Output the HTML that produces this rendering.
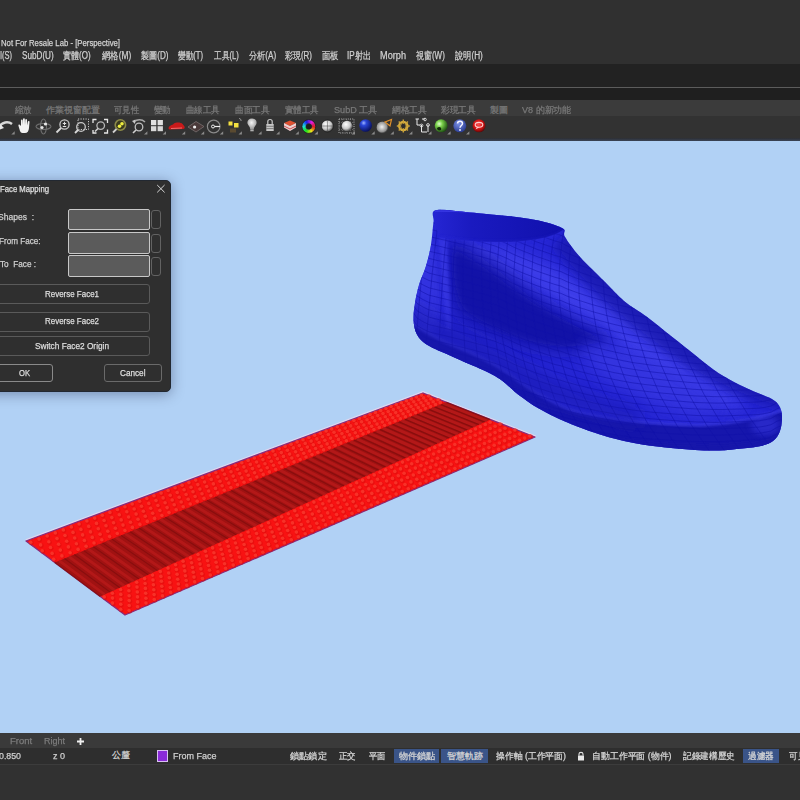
<!DOCTYPE html>
<html><head><meta charset="utf-8">
<style>
*{box-sizing:border-box}
html,body{margin:0;padding:0;width:800px;height:800px;overflow:hidden;background:#303030;font-family:"Liberation Sans",sans-serif}
.abs{position:absolute}
.t{position:absolute;white-space:pre;line-height:1;transform-origin:0 50%;-webkit-text-stroke:0.25px currentColor}
</style></head><body>
<div class="abs" style="left:0;top:0;width:800px;height:63.5px;background:#303030"></div>
<div class="abs" style="left:0;top:63.5px;width:800px;height:23.5px;background:#222222"></div>
<div class="abs" style="left:0;top:86.6px;width:800px;height:1.6px;background:#5c5c5c"></div>
<div class="abs" style="left:0;top:88.2px;width:800px;height:12.2px;background:#1f1f1f"></div>
<div class="abs" style="left:0;top:100.4px;width:800px;height:16px;background:#3b3b3b"></div>
<div class="abs" style="left:0;top:116.4px;width:800px;height:21.4px;background:#323232"></div>
<div class="abs" style="left:0;top:137.6px;width:800px;height:3.2px;background:linear-gradient(#2c2e33,#3a4456)"></div>
<div class="abs" style="left:0;top:140.5px;width:800px;height:592.5px;background:#b1d1f5"></div>
<div class="abs" style="left:0;top:732.6px;width:800px;height:15.4px;background:#3a3a3a"></div>
<div class="abs" style="left:0;top:748px;width:800px;height:15.8px;background:#2e2e2e"></div>
<div class="abs" style="left:0;top:763.8px;width:800px;height:1px;background:#3c3c3c"></div>
<div class="abs" style="left:0;top:764.8px;width:800px;height:36px;background:#313131"></div>

<svg class="abs" style="left:0;top:0" width="800" height="140" viewBox="0 0 800 140"><defs><radialGradient id="gBlue" cx="35%" cy="30%" r="70%"><stop offset="0" stop-color="#9fb4ff"/><stop offset="0.3" stop-color="#2a46d8"/><stop offset="1" stop-color="#0a1260"/></radialGradient><radialGradient id="gGreen" cx="35%" cy="35%" r="70%"><stop offset="0" stop-color="#e0ffd0"/><stop offset="0.35" stop-color="#7ad04a"/><stop offset="1" stop-color="#1a4a10"/></radialGradient><radialGradient id="gHelp" cx="40%" cy="35%" r="70%"><stop offset="0" stop-color="#7a90e8"/><stop offset="1" stop-color="#25368a"/></radialGradient><radialGradient id="gRed" cx="45%" cy="40%" r="65%"><stop offset="0" stop-color="#ff5050"/><stop offset="0.6" stop-color="#c81010"/><stop offset="1" stop-color="#400808"/></radialGradient><radialGradient id="gWhite" cx="40%" cy="35%" r="70%"><stop offset="0" stop-color="#ffffff"/><stop offset="0.6" stop-color="#c8c8c8"/><stop offset="1" stop-color="#3a3a3a"/></radialGradient><radialGradient id="gBlob" cx="45%" cy="45%" r="60%"><stop offset="0" stop-color="#f0f0f0"/><stop offset="0.7" stop-color="#909090"/><stop offset="1" stop-color="#2c2c2c" stop-opacity="0"/></radialGradient><radialGradient id="gBulb" cx="45%" cy="40%" r="60%"><stop offset="0" stop-color="#f4f4f4"/><stop offset="1" stop-color="#9a9a9a"/></radialGradient></defs><path d="M-1,127 C2,122 8,121 12,124" stroke="#d8d8d8" stroke-width="2.5" fill="none"/><path d="M0,124 L4,128 L-1,130 Z" fill="#e8e8e8"/><path d="M20,131 L18.5,126 C18,124.5 19.5,124 20.5,125.5 L21,126 L21,120.5 C21,119.3 22.6,119.3 22.6,120.5 L22.7,125 L23,119.3 C23,118 24.8,118 24.8,119.3 L25,125 L25.3,120 C25.3,118.8 27,118.8 27,120 L27,125.5 L27.8,121.8 C28,120.7 29.6,120.8 29.5,122 L29,128 C28.7,131 27.5,133 25,133 L22.5,133 C21.3,133 20.5,132.3 20,131 Z" fill="#f2f2f2"/><ellipse cx="43.5" cy="126.5" rx="7.5" ry="3" stroke="#6e6e6e" stroke-width="1.1" fill="none"/><ellipse cx="43.5" cy="126.5" rx="3" ry="7.5" stroke="#6e6e6e" stroke-width="1.1" fill="none"/><circle cx="45.5" cy="124" r="1.6" fill="#e8e8e8"/><circle cx="42" cy="127.5" r="1.6" fill="#e8e8e8"/><circle cx="64.5" cy="124.5" r="4.6" stroke="#c8c8c8" stroke-width="1.3" fill="none"/><path d="M61,128 L56.5,132.5" stroke="#d8d8d8" stroke-width="1.8"/><path d="M62.8,123.5 L66.2,123.5 M64.5,121.8 L64.5,125.2 M62.8,126.5 L66.2,126.5" stroke="#e0e0e0" stroke-width="1"/><rect x="78" y="119" width="10.5" height="10.5" stroke="#c8c8c8" stroke-width="1" stroke-dasharray="1.2,1.3" fill="none"/><circle cx="81" cy="127" r="4.3" stroke="#c8c8c8" stroke-width="1.3" fill="none"/><path d="M78,130 L75,133" stroke="#d8d8d8" stroke-width="1.8"/><path d="M93,123 L93,119.5 L96.5,119.5 M104,119.5 L107.5,119.5 L107.5,123 M107.5,129.5 L107.5,133 L104,133 M93,130 L93,133 L96.5,133" stroke="#e6e6e6" stroke-width="1.3" fill="none"/><circle cx="100.7" cy="125.6" r="3.8" stroke="#b8b8b8" stroke-width="1.3" fill="none"/><path d="M98,128.5 L95,131.5" stroke="#d0d0d0" stroke-width="1.6"/><circle cx="120.4" cy="125" r="5.2" stroke="#8c8a48" stroke-width="1.6" fill="#3a3a20"/><circle cx="119.5" cy="126.2" r="1.8" fill="#f0f040"/><circle cx="122" cy="123.8" r="1.8" fill="#f0f040"/><path d="M116.5,129 L113,132.5" stroke="#d0d0d0" stroke-width="1.8"/><circle cx="139" cy="127" r="3.8" stroke="#c0c0c0" stroke-width="1.3" fill="none"/><path d="M136,130 L133,133" stroke="#d0d0d0" stroke-width="1.6"/><path d="M134,122 C137,119 142,119 145,122" stroke="#a8a8a8" stroke-width="1.5" fill="none"/><path d="M132,121 L135.5,119.5 L135,124 Z" fill="#c8c8c8"/><rect x="151" y="120" width="5.3" height="5.2" fill="#e0e0e0"/><rect x="157.6" y="120" width="5.3" height="5.2" fill="#e0e0e0"/><rect x="151" y="126.2" width="5.3" height="5" fill="#d8d8d8"/><rect x="157.6" y="126.2" width="5.3" height="5" fill="#d8d8d8"/><path d="M168.5,128.5 C169,125 172,125.5 174,123.5 C176,122 181,122 182.5,124 L184.5,126.5 C185,128 184.5,129 183,129 L169.5,129.5 Z" fill="#c81a1a"/><path d="M171,128.5 L182,128" stroke="#ff9090" stroke-width="0.7"/><path d="M188,127 L196,121.5 L204,126.5 L196,132 Z" fill="#4a3a3a" stroke="#787070" stroke-width="0.8"/><circle cx="194.6" cy="127" r="1.6" fill="#f0f0f0"/><circle cx="213.7" cy="126.5" r="6.3" stroke="#8a8a8a" stroke-width="1.2" fill="none"/><circle cx="213" cy="126.5" r="1.5" fill="none" stroke="#f0f0f0" stroke-width="1"/><path d="M214.5,126.5 L220,126.5" stroke="#f0f0f0" stroke-width="1.2"/><rect x="228.5" y="121.5" width="4" height="4" fill="#f4e040"/><rect x="234" y="123" width="4.5" height="4.5" fill="#f4e040"/><rect x="230" y="128.5" width="6" height="4" fill="#5a4a30"/><path d="M239,118.5 A2,2 0 0 1 241,121" stroke="#9a9a9a" stroke-width="1" fill="none"/><path d="M252,118.5 C255.5,118.5 257,121 256.5,123.5 C256,125.5 254,126.5 253.8,129 L250.2,129 C250,126.5 248,125.5 247.5,123.5 C247,121 248.5,118.5 252,118.5 Z" fill="url(#gBulb)"/><rect x="250.3" y="129.3" width="3.4" height="2" fill="#b0b0b0"/><path d="M267.8,124 L267.8,121.5 C267.8,118.8 272.2,118.8 272.2,121.5 L272.2,124" stroke="#c8c8c8" stroke-width="1.2" fill="none"/><rect x="266.3" y="124" width="7.4" height="7" fill="#c8c8c8"/><path d="M266.3,126.3 L273.7,126.3 M266.3,128.6 L273.7,128.6" stroke="#5a5a5a" stroke-width="0.7"/><path d="M284,123 L290,120.5 L296,123 L290,126 Z" fill="#e05030"/><path d="M284,123 L290,126 L296,123 L296,127.5 L290,131 L284,127.5 Z" fill="#f0d0d0"/><path d="M284,126 L290,129 L296,126" stroke="#c03030" stroke-width="0.8" fill="none"/><path d="M313.80,126.50 A5.0,5.0 0 0 1 313.74,127.28" stroke="hsl(0,100%,55%)" stroke-width="3.4" fill="none"/><path d="M313.76,127.15 A5.0,5.0 0 0 1 313.59,127.92" stroke="hsl(8,100%,55%)" stroke-width="3.4" fill="none"/><path d="M313.63,127.79 A5.0,5.0 0 0 1 313.37,128.53" stroke="hsl(15,100%,55%)" stroke-width="3.4" fill="none"/><path d="M313.42,128.41 A5.0,5.0 0 0 1 313.06,129.11" stroke="hsl(22,100%,55%)" stroke-width="3.4" fill="none"/><path d="M313.13,129.00 A5.0,5.0 0 0 1 312.69,129.65" stroke="hsl(30,100%,55%)" stroke-width="3.4" fill="none"/><path d="M312.77,129.54 A5.0,5.0 0 0 1 312.24,130.13" stroke="hsl(38,100%,55%)" stroke-width="3.4" fill="none"/><path d="M312.34,130.04 A5.0,5.0 0 0 1 311.74,130.55" stroke="hsl(45,100%,55%)" stroke-width="3.4" fill="none"/><path d="M311.84,130.47 A5.0,5.0 0 0 1 311.19,130.89" stroke="hsl(52,100%,55%)" stroke-width="3.4" fill="none"/><path d="M311.30,130.83 A5.0,5.0 0 0 1 310.59,131.17" stroke="hsl(60,100%,55%)" stroke-width="3.4" fill="none"/><path d="M310.71,131.12 A5.0,5.0 0 0 1 309.97,131.36" stroke="hsl(68,100%,55%)" stroke-width="3.4" fill="none"/><path d="M310.09,131.33 A5.0,5.0 0 0 1 309.32,131.47" stroke="hsl(75,100%,55%)" stroke-width="3.4" fill="none"/><path d="M309.45,131.46 A5.0,5.0 0 0 1 308.67,131.50" stroke="hsl(82,100%,55%)" stroke-width="3.4" fill="none"/><path d="M308.80,131.50 A5.0,5.0 0 0 1 308.02,131.44" stroke="hsl(90,100%,55%)" stroke-width="3.4" fill="none"/><path d="M308.15,131.46 A5.0,5.0 0 0 1 307.38,131.29" stroke="hsl(98,100%,55%)" stroke-width="3.4" fill="none"/><path d="M307.51,131.33 A5.0,5.0 0 0 1 306.77,131.07" stroke="hsl(105,100%,55%)" stroke-width="3.4" fill="none"/><path d="M306.89,131.12 A5.0,5.0 0 0 1 306.19,130.76" stroke="hsl(112,100%,55%)" stroke-width="3.4" fill="none"/><path d="M306.30,130.83 A5.0,5.0 0 0 1 305.65,130.39" stroke="hsl(120,100%,55%)" stroke-width="3.4" fill="none"/><path d="M305.76,130.47 A5.0,5.0 0 0 1 305.17,129.94" stroke="hsl(128,100%,55%)" stroke-width="3.4" fill="none"/><path d="M305.26,130.04 A5.0,5.0 0 0 1 304.75,129.44" stroke="hsl(135,100%,55%)" stroke-width="3.4" fill="none"/><path d="M304.83,129.54 A5.0,5.0 0 0 1 304.41,128.89" stroke="hsl(142,100%,55%)" stroke-width="3.4" fill="none"/><path d="M304.47,129.00 A5.0,5.0 0 0 1 304.13,128.29" stroke="hsl(150,100%,55%)" stroke-width="3.4" fill="none"/><path d="M304.18,128.41 A5.0,5.0 0 0 1 303.94,127.67" stroke="hsl(158,100%,55%)" stroke-width="3.4" fill="none"/><path d="M303.97,127.79 A5.0,5.0 0 0 1 303.83,127.02" stroke="hsl(165,100%,55%)" stroke-width="3.4" fill="none"/><path d="M303.84,127.15 A5.0,5.0 0 0 1 303.80,126.37" stroke="hsl(172,100%,55%)" stroke-width="3.4" fill="none"/><path d="M303.80,126.50 A5.0,5.0 0 0 1 303.86,125.72" stroke="hsl(180,100%,55%)" stroke-width="3.4" fill="none"/><path d="M303.84,125.85 A5.0,5.0 0 0 1 304.01,125.08" stroke="hsl(188,100%,55%)" stroke-width="3.4" fill="none"/><path d="M303.97,125.21 A5.0,5.0 0 0 1 304.23,124.47" stroke="hsl(195,100%,55%)" stroke-width="3.4" fill="none"/><path d="M304.18,124.59 A5.0,5.0 0 0 1 304.54,123.89" stroke="hsl(202,100%,55%)" stroke-width="3.4" fill="none"/><path d="M304.47,124.00 A5.0,5.0 0 0 1 304.91,123.35" stroke="hsl(210,100%,55%)" stroke-width="3.4" fill="none"/><path d="M304.83,123.46 A5.0,5.0 0 0 1 305.36,122.87" stroke="hsl(218,100%,55%)" stroke-width="3.4" fill="none"/><path d="M305.26,122.96 A5.0,5.0 0 0 1 305.86,122.45" stroke="hsl(225,100%,55%)" stroke-width="3.4" fill="none"/><path d="M305.76,122.53 A5.0,5.0 0 0 1 306.41,122.11" stroke="hsl(232,100%,55%)" stroke-width="3.4" fill="none"/><path d="M306.30,122.17 A5.0,5.0 0 0 1 307.01,121.83" stroke="hsl(240,100%,55%)" stroke-width="3.4" fill="none"/><path d="M306.89,121.88 A5.0,5.0 0 0 1 307.63,121.64" stroke="hsl(248,100%,55%)" stroke-width="3.4" fill="none"/><path d="M307.51,121.67 A5.0,5.0 0 0 1 308.28,121.53" stroke="hsl(255,100%,55%)" stroke-width="3.4" fill="none"/><path d="M308.15,121.54 A5.0,5.0 0 0 1 308.93,121.50" stroke="hsl(262,100%,55%)" stroke-width="3.4" fill="none"/><path d="M308.80,121.50 A5.0,5.0 0 0 1 309.58,121.56" stroke="hsl(270,100%,55%)" stroke-width="3.4" fill="none"/><path d="M309.45,121.54 A5.0,5.0 0 0 1 310.22,121.71" stroke="hsl(278,100%,55%)" stroke-width="3.4" fill="none"/><path d="M310.09,121.67 A5.0,5.0 0 0 1 310.83,121.93" stroke="hsl(285,100%,55%)" stroke-width="3.4" fill="none"/><path d="M310.71,121.88 A5.0,5.0 0 0 1 311.41,122.24" stroke="hsl(292,100%,55%)" stroke-width="3.4" fill="none"/><path d="M311.30,122.17 A5.0,5.0 0 0 1 311.95,122.61" stroke="hsl(300,100%,55%)" stroke-width="3.4" fill="none"/><path d="M311.84,122.53 A5.0,5.0 0 0 1 312.43,123.06" stroke="hsl(308,100%,55%)" stroke-width="3.4" fill="none"/><path d="M312.34,122.96 A5.0,5.0 0 0 1 312.85,123.56" stroke="hsl(315,100%,55%)" stroke-width="3.4" fill="none"/><path d="M312.77,123.46 A5.0,5.0 0 0 1 313.19,124.11" stroke="hsl(322,100%,55%)" stroke-width="3.4" fill="none"/><path d="M313.13,124.00 A5.0,5.0 0 0 1 313.47,124.71" stroke="hsl(330,100%,55%)" stroke-width="3.4" fill="none"/><path d="M313.42,124.59 A5.0,5.0 0 0 1 313.66,125.33" stroke="hsl(338,100%,55%)" stroke-width="3.4" fill="none"/><path d="M313.63,125.21 A5.0,5.0 0 0 1 313.77,125.98" stroke="hsl(345,100%,55%)" stroke-width="3.4" fill="none"/><path d="M313.76,125.85 A5.0,5.0 0 0 1 313.80,126.63" stroke="hsl(352,100%,55%)" stroke-width="3.4" fill="none"/><circle cx="308.8" cy="126.5" r="2.6" fill="#1c1c1c"/><circle cx="308.8" cy="126.5" r="6.9" fill="none" stroke="#202020" stroke-width="0.8"/><circle cx="327.4" cy="126" r="6" fill="url(#gWhite)" stroke="#1c1c1c" stroke-width="0.8"/><path d="M327.4,120 L327.4,132 M321.4,126 L333.4,126" stroke="#3a3a3a" stroke-width="0.5"/><rect x="339" y="119" width="15" height="14" fill="none" stroke="#bdbdbd" stroke-width="0.9" stroke-dasharray="1,1.2"/><path d="M339,122.5 L354,122.5 M339,126 L354,126 M339,129.5 L354,129.5 M342.7,119 L342.7,133 M346.5,119 L346.5,133 M350.2,119 L350.2,133" stroke="#9a9a9a" stroke-width="0.6" stroke-dasharray="1,1.2"/><circle cx="347" cy="126" r="5.2" fill="url(#gWhite)"/><circle cx="365.6" cy="125.5" r="6.3" fill="url(#gBlue)"/><circle cx="382.5" cy="127.5" r="6" fill="url(#gBlob)"/><path d="M385,122 L391.5,119.5 L390,126 Z" fill="none" stroke="#e0902a" stroke-width="1.2"/><circle cx="403.3" cy="126" r="4.2" fill="none" stroke="#d8b040" stroke-width="2.2"/><path d="M403.3,119.5 L403.3,132.5 M396.8,126 L409.8,126 M398.7,121.4 L407.9,130.6 M407.9,121.4 L398.7,130.6" stroke="#c8a038" stroke-width="1.4"/><circle cx="403.3" cy="126" r="2.3" fill="#2c2c2c"/><path d="M415.5,119 L419,119 M417,119 L417,125 L420,125 M422,119 L425,119 M421.5,125 L421.5,132 L427,132 M428,125 L428,132" stroke="#e8e8e8" stroke-width="1" fill="none"/><circle cx="421.5" cy="125.5" r="1.4" fill="none" stroke="#e0e0e0" stroke-width="0.9"/><circle cx="428" cy="125" r="1.4" fill="none" stroke="#e0e0e0" stroke-width="0.9"/><circle cx="425" cy="119.5" r="1.3" fill="none" stroke="#e0e0e0" stroke-width="0.9"/><circle cx="441.2" cy="125.8" r="6.5" fill="url(#gGreen)"/><path d="M437,128 C439,126 442,127 441,130 C439,131 437,130 437,128 Z" fill="#102a08"/><circle cx="459.8" cy="125.8" r="6.5" fill="url(#gHelp)"/><path d="M457.5,123.5 C457.5,120.5 462.5,120.5 462.5,123.5 C462.5,125.5 460,125.5 460,127.8" stroke="#f4f4ff" stroke-width="1.5" fill="none"/><circle cx="460" cy="130" r="0.9" fill="#f4f4ff"/><circle cx="479" cy="125.8" r="6.5" fill="url(#gRed)"/><ellipse cx="479" cy="124.8" rx="3.8" ry="2.4" fill="none" stroke="#ffd0d0" stroke-width="1.1"/><path d="M477,127 L475.5,129.5 L479.5,127.3" fill="#ffd0d0"/><path d="M11.3,134.5 L14.7,134.5 L14.7,131.3 Z" fill="#8a8a8a"/><path d="M144.0,134.5 L147.39999999999998,134.5 L147.39999999999998,131.3 Z" fill="#8a8a8a"/><path d="M162.60000000000002,134.5 L166.0,134.5 L166.0,131.3 Z" fill="#8a8a8a"/><path d="M181.8,134.5 L185.2,134.5 L185.2,131.3 Z" fill="#8a8a8a"/><path d="M200.8,134.5 L204.2,134.5 L204.2,131.3 Z" fill="#8a8a8a"/><path d="M219.8,134.5 L223.2,134.5 L223.2,131.3 Z" fill="#8a8a8a"/><path d="M238.5,134.5 L241.89999999999998,134.5 L241.89999999999998,131.3 Z" fill="#8a8a8a"/><path d="M258.2,134.5 L261.59999999999997,134.5 L261.59999999999997,131.3 Z" fill="#8a8a8a"/><path d="M276.2,134.5 L279.59999999999997,134.5 L279.59999999999997,131.3 Z" fill="#8a8a8a"/><path d="M295.40000000000003,134.5 L298.8,134.5 L298.8,131.3 Z" fill="#8a8a8a"/><path d="M314.5,134.5 L317.9,134.5 L317.9,131.3 Z" fill="#8a8a8a"/><path d="M351.6,134.5 L355.0,134.5 L355.0,131.3 Z" fill="#8a8a8a"/><path d="M371.3,134.5 L374.7,134.5 L374.7,131.3 Z" fill="#8a8a8a"/><path d="M390.40000000000003,134.5 L393.8,134.5 L393.8,131.3 Z" fill="#8a8a8a"/><path d="M409.0,134.5 L412.4,134.5 L412.4,131.3 Z" fill="#8a8a8a"/><path d="M428.1,134.5 L431.5,134.5 L431.5,131.3 Z" fill="#8a8a8a"/><path d="M447.2,134.5 L450.59999999999997,134.5 L450.59999999999997,131.3 Z" fill="#8a8a8a"/><path d="M466.0,134.5 L469.4,134.5 L469.4,131.3 Z" fill="#8a8a8a"/></svg>
<svg class="abs" style="left:0;top:0" width="800" height="800" viewBox="0 0 800 800"><polyline points="25.7,539.8 423.0,391.6 535.8,436.1" fill="none" stroke="#f6d8e8" stroke-width="1.2" opacity="0.7"/>
<polygon points="26.0,541.0 423.0,393.0 535.0,437.0 125.0,615.0" fill="#f81212" stroke="#8a2a7a" stroke-width="1.3" stroke-linejoin="round"/>
<g fill="#d80a0a" opacity="0.45"><circle cx="31.4" cy="543.0" r="2.4"/><circle cx="41.3" cy="545.7" r="2.4"/><circle cx="42.9" cy="551.5" r="2.4"/><circle cx="52.8" cy="554.2" r="2.4"/><circle cx="54.4" cy="560.1" r="2.4"/><circle cx="104.9" cy="597.7" r="2.4"/><circle cx="113.2" cy="598.9" r="2.4"/><circle cx="113.2" cy="603.9" r="2.4"/><circle cx="121.5" cy="605.1" r="2.4"/><circle cx="121.4" cy="610.0" r="2.4"/><circle cx="129.8" cy="611.3" r="2.4"/><circle cx="39.7" cy="539.9" r="2.4"/><circle cx="49.5" cy="542.5" r="2.4"/><circle cx="51.2" cy="548.3" r="2.4"/><circle cx="61.0" cy="550.9" r="2.4"/><circle cx="62.6" cy="556.7" r="2.4"/><circle cx="113.1" cy="594.0" r="2.4"/><circle cx="121.5" cy="595.2" r="2.4"/><circle cx="121.5" cy="600.2" r="2.4"/><circle cx="129.9" cy="601.4" r="2.4"/><circle cx="129.9" cy="606.3" r="2.4"/><circle cx="138.3" cy="607.6" r="2.4"/><circle cx="47.9" cy="536.8" r="2.4"/><circle cx="57.7" cy="539.4" r="2.4"/><circle cx="59.3" cy="545.1" r="2.4"/><circle cx="69.1" cy="547.7" r="2.4"/><circle cx="70.8" cy="553.5" r="2.4"/><circle cx="121.3" cy="590.3" r="2.4"/><circle cx="129.6" cy="591.6" r="2.4"/><circle cx="129.8" cy="596.5" r="2.4"/><circle cx="138.2" cy="597.7" r="2.4"/><circle cx="138.3" cy="602.7" r="2.4"/><circle cx="146.7" cy="603.9" r="2.4"/><circle cx="56.0" cy="533.7" r="2.4"/><circle cx="65.7" cy="536.3" r="2.4"/><circle cx="67.4" cy="542.0" r="2.4"/><circle cx="77.1" cy="544.5" r="2.4"/><circle cx="78.8" cy="550.2" r="2.4"/><circle cx="129.4" cy="586.6" r="2.4"/><circle cx="137.7" cy="587.9" r="2.4"/><circle cx="138.0" cy="592.8" r="2.4"/><circle cx="146.4" cy="594.1" r="2.4"/><circle cx="146.6" cy="599.0" r="2.4"/><circle cx="155.0" cy="600.3" r="2.4"/><circle cx="64.0" cy="530.7" r="2.4"/><circle cx="73.7" cy="533.2" r="2.4"/><circle cx="75.4" cy="538.8" r="2.4"/><circle cx="85.1" cy="541.3" r="2.4"/><circle cx="86.8" cy="547.0" r="2.4"/><circle cx="137.4" cy="583.0" r="2.4"/><circle cx="145.8" cy="584.3" r="2.4"/><circle cx="146.1" cy="589.2" r="2.4"/><circle cx="154.5" cy="590.5" r="2.4"/><circle cx="154.8" cy="595.4" r="2.4"/><circle cx="163.2" cy="596.7" r="2.4"/><circle cx="72.0" cy="527.7" r="2.4"/><circle cx="81.6" cy="530.2" r="2.4"/><circle cx="83.3" cy="535.7" r="2.4"/><circle cx="93.0" cy="538.2" r="2.4"/><circle cx="94.7" cy="543.8" r="2.4"/><circle cx="145.3" cy="579.4" r="2.4"/><circle cx="153.7" cy="580.8" r="2.4"/><circle cx="154.1" cy="585.6" r="2.4"/><circle cx="162.5" cy="587.0" r="2.4"/><circle cx="162.9" cy="591.8" r="2.4"/><circle cx="171.4" cy="593.2" r="2.4"/><circle cx="79.8" cy="524.8" r="2.4"/><circle cx="89.4" cy="527.2" r="2.4"/><circle cx="91.2" cy="532.7" r="2.4"/><circle cx="100.8" cy="535.1" r="2.4"/><circle cx="102.5" cy="540.6" r="2.4"/><circle cx="153.2" cy="575.9" r="2.4"/><circle cx="161.6" cy="577.2" r="2.4"/><circle cx="162.1" cy="582.1" r="2.4"/><circle cx="170.5" cy="583.4" r="2.4"/><circle cx="171.0" cy="588.3" r="2.4"/><circle cx="179.5" cy="589.7" r="2.4"/><circle cx="87.6" cy="521.8" r="2.4"/><circle cx="97.2" cy="524.2" r="2.4"/><circle cx="99.0" cy="529.6" r="2.4"/><circle cx="108.5" cy="532.0" r="2.4"/><circle cx="110.3" cy="537.4" r="2.4"/><circle cx="161.0" cy="572.4" r="2.4"/><circle cx="169.4" cy="573.8" r="2.4"/><circle cx="170.0" cy="578.6" r="2.4"/><circle cx="178.4" cy="580.0" r="2.4"/><circle cx="179.0" cy="584.8" r="2.4"/><circle cx="187.5" cy="586.2" r="2.4"/><circle cx="95.4" cy="518.9" r="2.4"/><circle cx="104.8" cy="521.3" r="2.4"/><circle cx="106.7" cy="526.6" r="2.4"/><circle cx="116.1" cy="529.0" r="2.4"/><circle cx="118.0" cy="534.3" r="2.4"/><circle cx="168.7" cy="568.9" r="2.4"/><circle cx="177.1" cy="570.3" r="2.4"/><circle cx="177.8" cy="575.1" r="2.4"/><circle cx="186.2" cy="576.5" r="2.4"/><circle cx="186.9" cy="581.3" r="2.4"/><circle cx="195.4" cy="582.7" r="2.4"/><circle cx="103.0" cy="516.0" r="2.4"/><circle cx="112.5" cy="518.4" r="2.4"/><circle cx="114.3" cy="523.6" r="2.4"/><circle cx="123.7" cy="525.9" r="2.4"/><circle cx="125.6" cy="531.3" r="2.4"/><circle cx="176.3" cy="565.5" r="2.4"/><circle cx="184.7" cy="566.9" r="2.4"/><circle cx="185.5" cy="571.7" r="2.4"/><circle cx="194.0" cy="573.1" r="2.4"/><circle cx="194.7" cy="577.9" r="2.4"/><circle cx="203.2" cy="579.3" r="2.4"/><circle cx="110.6" cy="513.2" r="2.4"/><circle cx="120.0" cy="515.5" r="2.4"/><circle cx="121.9" cy="520.7" r="2.4"/><circle cx="131.2" cy="523.0" r="2.4"/><circle cx="133.1" cy="528.2" r="2.4"/><circle cx="183.8" cy="562.1" r="2.4"/><circle cx="192.3" cy="563.5" r="2.4"/><circle cx="193.2" cy="568.3" r="2.4"/><circle cx="201.6" cy="569.7" r="2.4"/><circle cx="202.5" cy="574.5" r="2.4"/><circle cx="211.0" cy="575.9" r="2.4"/><circle cx="118.1" cy="510.3" r="2.4"/><circle cx="127.5" cy="512.6" r="2.4"/><circle cx="129.3" cy="517.8" r="2.4"/><circle cx="138.7" cy="520.0" r="2.4"/><circle cx="140.6" cy="525.2" r="2.4"/><circle cx="191.3" cy="558.7" r="2.4"/><circle cx="199.8" cy="560.1" r="2.4"/><circle cx="200.7" cy="564.9" r="2.4"/><circle cx="209.2" cy="566.3" r="2.4"/><circle cx="210.2" cy="571.1" r="2.4"/><circle cx="218.7" cy="572.6" r="2.4"/><circle cx="125.6" cy="507.5" r="2.4"/><circle cx="134.9" cy="509.8" r="2.4"/><circle cx="136.8" cy="514.9" r="2.4"/><circle cx="146.0" cy="517.1" r="2.4"/><circle cx="148.0" cy="522.2" r="2.4"/><circle cx="198.7" cy="555.3" r="2.4"/><circle cx="207.2" cy="556.8" r="2.4"/><circle cx="208.3" cy="561.6" r="2.4"/><circle cx="216.8" cy="563.0" r="2.4"/><circle cx="217.8" cy="567.8" r="2.4"/><circle cx="226.3" cy="569.2" r="2.4"/><circle cx="132.9" cy="504.8" r="2.4"/><circle cx="142.2" cy="507.0" r="2.4"/><circle cx="144.1" cy="512.0" r="2.4"/><circle cx="153.4" cy="514.1" r="2.4"/><circle cx="155.3" cy="519.2" r="2.4"/><circle cx="206.1" cy="552.0" r="2.4"/><circle cx="214.6" cy="553.5" r="2.4"/><circle cx="215.7" cy="558.2" r="2.4"/><circle cx="224.2" cy="559.7" r="2.4"/><circle cx="225.3" cy="564.5" r="2.4"/><circle cx="233.9" cy="565.9" r="2.4"/><circle cx="140.3" cy="502.0" r="2.4"/><circle cx="149.5" cy="504.2" r="2.4"/><circle cx="151.4" cy="509.1" r="2.4"/><circle cx="160.6" cy="511.3" r="2.4"/><circle cx="162.6" cy="516.3" r="2.4"/><circle cx="213.3" cy="548.7" r="2.4"/><circle cx="221.8" cy="550.2" r="2.4"/><circle cx="223.1" cy="555.0" r="2.4"/><circle cx="231.6" cy="556.4" r="2.4"/><circle cx="232.8" cy="561.2" r="2.4"/><circle cx="241.4" cy="562.7" r="2.4"/><circle cx="147.5" cy="499.3" r="2.4"/><circle cx="156.7" cy="501.4" r="2.4"/><circle cx="158.6" cy="506.3" r="2.4"/><circle cx="167.8" cy="508.4" r="2.4"/><circle cx="169.7" cy="513.4" r="2.4"/><circle cx="220.5" cy="545.5" r="2.4"/><circle cx="229.1" cy="547.0" r="2.4"/><circle cx="230.4" cy="551.7" r="2.4"/><circle cx="238.9" cy="553.2" r="2.4"/><circle cx="240.2" cy="557.9" r="2.4"/><circle cx="248.8" cy="559.4" r="2.4"/><circle cx="154.7" cy="496.6" r="2.4"/><circle cx="163.8" cy="498.7" r="2.4"/><circle cx="165.8" cy="503.5" r="2.4"/><circle cx="174.9" cy="505.6" r="2.4"/><circle cx="176.9" cy="510.5" r="2.4"/><circle cx="227.7" cy="542.3" r="2.4"/><circle cx="236.2" cy="543.8" r="2.4"/><circle cx="237.6" cy="548.5" r="2.4"/><circle cx="246.2" cy="550.0" r="2.4"/><circle cx="247.6" cy="554.7" r="2.4"/><circle cx="256.2" cy="556.2" r="2.4"/><circle cx="161.8" cy="493.9" r="2.4"/><circle cx="170.9" cy="496.0" r="2.4"/><circle cx="172.9" cy="500.8" r="2.4"/><circle cx="181.9" cy="502.8" r="2.4"/><circle cx="183.9" cy="507.6" r="2.4"/><circle cx="234.7" cy="539.1" r="2.4"/><circle cx="243.3" cy="540.6" r="2.4"/><circle cx="244.8" cy="545.3" r="2.4"/><circle cx="253.4" cy="546.8" r="2.4"/><circle cx="254.8" cy="551.5" r="2.4"/><circle cx="263.5" cy="553.0" r="2.4"/><circle cx="168.8" cy="491.3" r="2.4"/><circle cx="177.9" cy="493.3" r="2.4"/><circle cx="179.9" cy="498.0" r="2.4"/><circle cx="188.9" cy="500.0" r="2.4"/><circle cx="190.9" cy="504.8" r="2.4"/><circle cx="241.7" cy="535.9" r="2.4"/><circle cx="250.3" cy="537.4" r="2.4"/><circle cx="251.9" cy="542.1" r="2.4"/><circle cx="260.5" cy="543.7" r="2.4"/><circle cx="262.0" cy="548.3" r="2.4"/><circle cx="270.7" cy="549.9" r="2.4"/><circle cx="175.8" cy="488.6" r="2.4"/><circle cx="184.8" cy="490.6" r="2.4"/><circle cx="186.8" cy="495.3" r="2.4"/><circle cx="195.8" cy="497.3" r="2.4"/><circle cx="197.9" cy="502.0" r="2.4"/><circle cx="248.7" cy="532.8" r="2.4"/><circle cx="257.3" cy="534.3" r="2.4"/><circle cx="258.9" cy="539.0" r="2.4"/><circle cx="267.6" cy="540.5" r="2.4"/><circle cx="269.2" cy="545.2" r="2.4"/><circle cx="277.9" cy="546.8" r="2.4"/><circle cx="182.8" cy="486.0" r="2.4"/><circle cx="191.7" cy="488.0" r="2.4"/><circle cx="193.7" cy="492.6" r="2.4"/><circle cx="202.7" cy="494.5" r="2.4"/><circle cx="204.7" cy="499.2" r="2.4"/><circle cx="255.5" cy="529.7" r="2.4"/><circle cx="264.2" cy="531.2" r="2.4"/><circle cx="265.9" cy="535.9" r="2.4"/><circle cx="274.6" cy="537.4" r="2.4"/><circle cx="276.3" cy="542.1" r="2.4"/><circle cx="285.0" cy="543.7" r="2.4"/><circle cx="189.6" cy="483.4" r="2.4"/><circle cx="198.5" cy="485.4" r="2.4"/><circle cx="200.6" cy="489.9" r="2.4"/><circle cx="209.4" cy="491.8" r="2.4"/><circle cx="211.5" cy="496.4" r="2.4"/><circle cx="262.3" cy="526.6" r="2.4"/><circle cx="271.0" cy="528.2" r="2.4"/><circle cx="272.8" cy="532.8" r="2.4"/><circle cx="281.5" cy="534.4" r="2.4"/><circle cx="283.3" cy="539.0" r="2.4"/><circle cx="292.0" cy="540.6" r="2.4"/><circle cx="196.4" cy="480.9" r="2.4"/><circle cx="205.3" cy="482.8" r="2.4"/><circle cx="207.4" cy="487.3" r="2.4"/><circle cx="216.2" cy="489.2" r="2.4"/><circle cx="218.3" cy="493.7" r="2.4"/><circle cx="269.1" cy="523.5" r="2.4"/><circle cx="277.8" cy="525.1" r="2.4"/><circle cx="279.7" cy="529.8" r="2.4"/><circle cx="288.4" cy="531.3" r="2.4"/><circle cx="290.3" cy="536.0" r="2.4"/><circle cx="299.0" cy="537.6" r="2.4"/><circle cx="203.2" cy="478.3" r="2.4"/><circle cx="212.0" cy="480.2" r="2.4"/><circle cx="214.1" cy="484.7" r="2.4"/><circle cx="222.8" cy="486.5" r="2.4"/><circle cx="225.0" cy="491.0" r="2.4"/><circle cx="275.8" cy="520.5" r="2.4"/><circle cx="284.5" cy="522.1" r="2.4"/><circle cx="286.5" cy="526.7" r="2.4"/><circle cx="295.2" cy="528.3" r="2.4"/><circle cx="297.1" cy="532.9" r="2.4"/><circle cx="305.9" cy="534.5" r="2.4"/><circle cx="209.9" cy="475.8" r="2.4"/><circle cx="218.6" cy="477.7" r="2.4"/><circle cx="220.7" cy="482.1" r="2.4"/><circle cx="229.5" cy="483.9" r="2.4"/><circle cx="231.6" cy="488.3" r="2.4"/><circle cx="282.4" cy="517.5" r="2.4"/><circle cx="291.1" cy="519.1" r="2.4"/><circle cx="293.2" cy="523.7" r="2.4"/><circle cx="302.0" cy="525.3" r="2.4"/><circle cx="304.0" cy="529.9" r="2.4"/><circle cx="312.8" cy="531.6" r="2.4"/><circle cx="216.5" cy="473.3" r="2.4"/><circle cx="225.2" cy="475.1" r="2.4"/><circle cx="227.3" cy="479.5" r="2.4"/><circle cx="236.0" cy="481.3" r="2.4"/><circle cx="238.2" cy="485.6" r="2.4"/><circle cx="289.0" cy="514.6" r="2.4"/><circle cx="297.7" cy="516.2" r="2.4"/><circle cx="299.9" cy="520.8" r="2.4"/><circle cx="308.6" cy="522.4" r="2.4"/><circle cx="310.8" cy="527.0" r="2.4"/><circle cx="319.6" cy="528.6" r="2.4"/><circle cx="223.1" cy="470.8" r="2.4"/><circle cx="231.7" cy="472.6" r="2.4"/><circle cx="233.9" cy="476.9" r="2.4"/><circle cx="242.5" cy="478.7" r="2.4"/><circle cx="244.7" cy="483.0" r="2.4"/><circle cx="295.5" cy="511.6" r="2.4"/><circle cx="304.2" cy="513.3" r="2.4"/><circle cx="306.5" cy="517.8" r="2.4"/><circle cx="315.3" cy="519.5" r="2.4"/><circle cx="317.5" cy="524.0" r="2.4"/><circle cx="326.3" cy="525.7" r="2.4"/><circle cx="229.6" cy="468.4" r="2.4"/><circle cx="238.2" cy="470.1" r="2.4"/><circle cx="240.4" cy="474.4" r="2.4"/><circle cx="249.0" cy="476.1" r="2.4"/><circle cx="251.1" cy="480.4" r="2.4"/><circle cx="301.9" cy="508.7" r="2.4"/><circle cx="310.7" cy="510.3" r="2.4"/><circle cx="313.0" cy="514.9" r="2.4"/><circle cx="321.9" cy="516.5" r="2.4"/><circle cx="324.1" cy="521.1" r="2.4"/><circle cx="333.0" cy="522.7" r="2.4"/><circle cx="236.1" cy="466.0" r="2.4"/><circle cx="244.6" cy="467.7" r="2.4"/><circle cx="246.8" cy="471.9" r="2.4"/><circle cx="255.3" cy="473.6" r="2.4"/><circle cx="257.5" cy="477.8" r="2.4"/><circle cx="308.3" cy="505.8" r="2.4"/><circle cx="317.1" cy="507.5" r="2.4"/><circle cx="319.5" cy="512.0" r="2.4"/><circle cx="328.4" cy="513.7" r="2.4"/><circle cx="330.7" cy="518.2" r="2.4"/><circle cx="339.7" cy="519.9" r="2.4"/><circle cx="242.5" cy="463.5" r="2.4"/><circle cx="251.0" cy="465.2" r="2.4"/><circle cx="253.2" cy="469.4" r="2.4"/><circle cx="261.7" cy="471.0" r="2.4"/><circle cx="263.9" cy="475.2" r="2.4"/><circle cx="314.6" cy="502.9" r="2.4"/><circle cx="323.5" cy="504.6" r="2.4"/><circle cx="325.9" cy="509.1" r="2.4"/><circle cx="334.8" cy="510.8" r="2.4"/><circle cx="337.3" cy="515.3" r="2.4"/><circle cx="346.2" cy="517.0" r="2.4"/><circle cx="248.8" cy="461.2" r="2.4"/><circle cx="257.3" cy="462.8" r="2.4"/><circle cx="259.5" cy="466.9" r="2.4"/><circle cx="267.9" cy="468.6" r="2.4"/><circle cx="270.1" cy="472.7" r="2.4"/><circle cx="320.9" cy="500.1" r="2.4"/><circle cx="329.8" cy="501.8" r="2.4"/><circle cx="332.3" cy="506.3" r="2.4"/><circle cx="341.2" cy="508.0" r="2.4"/><circle cx="343.8" cy="512.5" r="2.4"/><circle cx="352.7" cy="514.2" r="2.4"/><circle cx="255.1" cy="458.8" r="2.4"/><circle cx="263.6" cy="460.4" r="2.4"/><circle cx="265.7" cy="464.5" r="2.4"/><circle cx="274.2" cy="466.1" r="2.4"/><circle cx="276.4" cy="470.2" r="2.4"/><circle cx="327.1" cy="497.3" r="2.4"/><circle cx="336.0" cy="499.0" r="2.4"/><circle cx="338.7" cy="503.5" r="2.4"/><circle cx="347.6" cy="505.2" r="2.4"/><circle cx="350.2" cy="509.7" r="2.4"/><circle cx="359.2" cy="511.3" r="2.4"/><circle cx="261.4" cy="456.4" r="2.4"/><circle cx="269.8" cy="458.0" r="2.4"/><circle cx="272.0" cy="462.0" r="2.4"/><circle cx="280.3" cy="463.6" r="2.4"/><circle cx="282.5" cy="467.6" r="2.4"/><circle cx="333.3" cy="494.5" r="2.4"/><circle cx="342.2" cy="496.2" r="2.4"/><circle cx="344.9" cy="500.7" r="2.4"/><circle cx="353.9" cy="502.4" r="2.4"/><circle cx="356.6" cy="506.9" r="2.4"/><circle cx="365.6" cy="508.5" r="2.4"/><circle cx="267.6" cy="454.1" r="2.4"/><circle cx="275.9" cy="455.7" r="2.4"/><circle cx="278.1" cy="459.6" r="2.4"/><circle cx="286.4" cy="461.2" r="2.4"/><circle cx="288.7" cy="465.2" r="2.4"/><circle cx="339.4" cy="491.7" r="2.4"/><circle cx="348.3" cy="493.5" r="2.4"/><circle cx="351.1" cy="497.9" r="2.4"/><circle cx="360.1" cy="499.6" r="2.4"/><circle cx="362.9" cy="504.1" r="2.4"/><circle cx="372.0" cy="505.8" r="2.4"/><circle cx="273.7" cy="451.8" r="2.4"/><circle cx="282.0" cy="453.4" r="2.4"/><circle cx="284.2" cy="457.2" r="2.4"/><circle cx="292.5" cy="458.8" r="2.4"/><circle cx="294.7" cy="462.7" r="2.4"/><circle cx="345.4" cy="489.0" r="2.4"/><circle cx="354.4" cy="490.7" r="2.4"/><circle cx="357.3" cy="495.2" r="2.4"/><circle cx="366.3" cy="496.9" r="2.4"/><circle cx="369.2" cy="501.3" r="2.4"/><circle cx="378.3" cy="503.0" r="2.4"/><circle cx="279.8" cy="449.5" r="2.4"/><circle cx="288.1" cy="451.0" r="2.4"/><circle cx="290.3" cy="454.9" r="2.4"/><circle cx="298.5" cy="456.4" r="2.4"/><circle cx="300.8" cy="460.3" r="2.4"/><circle cx="351.4" cy="486.3" r="2.4"/><circle cx="360.4" cy="488.0" r="2.4"/><circle cx="363.4" cy="492.4" r="2.4"/><circle cx="372.5" cy="494.2" r="2.4"/><circle cx="375.4" cy="498.6" r="2.4"/><circle cx="384.5" cy="500.3" r="2.4"/><circle cx="285.8" cy="447.2" r="2.4"/><circle cx="294.1" cy="448.7" r="2.4"/><circle cx="296.3" cy="452.5" r="2.4"/><circle cx="304.5" cy="454.0" r="2.4"/><circle cx="306.7" cy="457.8" r="2.4"/><circle cx="357.4" cy="483.6" r="2.4"/><circle cx="366.4" cy="485.3" r="2.4"/><circle cx="369.5" cy="489.7" r="2.4"/><circle cx="378.6" cy="491.5" r="2.4"/><circle cx="381.6" cy="495.9" r="2.4"/><circle cx="390.7" cy="497.6" r="2.4"/><circle cx="291.8" cy="445.0" r="2.4"/><circle cx="300.0" cy="446.4" r="2.4"/><circle cx="302.2" cy="450.2" r="2.4"/><circle cx="310.4" cy="451.7" r="2.4"/><circle cx="312.7" cy="455.4" r="2.4"/><circle cx="363.3" cy="480.9" r="2.4"/><circle cx="372.3" cy="482.7" r="2.4"/><circle cx="375.5" cy="487.1" r="2.4"/><circle cx="384.6" cy="488.8" r="2.4"/><circle cx="387.7" cy="493.2" r="2.4"/><circle cx="396.8" cy="494.9" r="2.4"/><circle cx="297.8" cy="442.7" r="2.4"/><circle cx="305.9" cy="444.2" r="2.4"/><circle cx="308.1" cy="447.9" r="2.4"/><circle cx="316.3" cy="449.3" r="2.4"/><circle cx="318.5" cy="453.1" r="2.4"/><circle cx="369.1" cy="478.3" r="2.4"/><circle cx="378.2" cy="480.0" r="2.4"/><circle cx="381.4" cy="484.4" r="2.4"/><circle cx="390.6" cy="486.2" r="2.4"/><circle cx="393.7" cy="490.5" r="2.4"/><circle cx="402.9" cy="492.3" r="2.4"/><circle cx="303.7" cy="440.5" r="2.4"/><circle cx="311.8" cy="441.9" r="2.4"/><circle cx="314.0" cy="445.6" r="2.4"/><circle cx="322.1" cy="447.0" r="2.4"/><circle cx="324.3" cy="450.7" r="2.4"/><circle cx="374.9" cy="475.7" r="2.4"/><circle cx="384.0" cy="477.4" r="2.4"/><circle cx="387.3" cy="481.8" r="2.4"/><circle cx="396.5" cy="483.5" r="2.4"/><circle cx="399.8" cy="487.9" r="2.4"/><circle cx="409.0" cy="489.6" r="2.4"/><circle cx="309.5" cy="438.3" r="2.4"/><circle cx="317.6" cy="439.7" r="2.4"/><circle cx="319.8" cy="443.3" r="2.4"/><circle cx="327.8" cy="444.7" r="2.4"/><circle cx="330.1" cy="448.4" r="2.4"/><circle cx="380.7" cy="473.0" r="2.4"/><circle cx="389.8" cy="474.8" r="2.4"/><circle cx="393.2" cy="479.2" r="2.4"/><circle cx="402.4" cy="480.9" r="2.4"/><circle cx="405.7" cy="485.3" r="2.4"/><circle cx="415.0" cy="487.0" r="2.4"/><circle cx="315.3" cy="436.1" r="2.4"/><circle cx="323.3" cy="437.5" r="2.4"/><circle cx="325.6" cy="441.1" r="2.4"/><circle cx="333.6" cy="442.4" r="2.4"/><circle cx="335.8" cy="446.1" r="2.4"/><circle cx="386.4" cy="470.5" r="2.4"/><circle cx="395.5" cy="472.2" r="2.4"/><circle cx="399.0" cy="476.6" r="2.4"/><circle cx="408.2" cy="478.3" r="2.4"/><circle cx="411.6" cy="482.7" r="2.4"/><circle cx="420.9" cy="484.4" r="2.4"/><circle cx="321.1" cy="434.0" r="2.4"/><circle cx="329.0" cy="435.3" r="2.4"/><circle cx="331.3" cy="438.9" r="2.4"/><circle cx="339.2" cy="440.2" r="2.4"/><circle cx="341.5" cy="443.7" r="2.4"/><circle cx="392.0" cy="467.9" r="2.4"/><circle cx="401.2" cy="469.7" r="2.4"/><circle cx="404.8" cy="474.0" r="2.4"/><circle cx="414.0" cy="475.8" r="2.4"/><circle cx="417.5" cy="480.1" r="2.4"/><circle cx="426.8" cy="481.9" r="2.4"/><circle cx="326.8" cy="431.8" r="2.4"/><circle cx="334.7" cy="433.1" r="2.4"/><circle cx="337.0" cy="436.6" r="2.4"/><circle cx="344.9" cy="437.9" r="2.4"/><circle cx="347.1" cy="441.5" r="2.4"/><circle cx="397.6" cy="465.4" r="2.4"/><circle cx="406.9" cy="467.2" r="2.4"/><circle cx="410.5" cy="471.5" r="2.4"/><circle cx="419.8" cy="473.2" r="2.4"/><circle cx="423.3" cy="477.5" r="2.4"/><circle cx="432.7" cy="479.3" r="2.4"/><circle cx="332.4" cy="429.7" r="2.4"/><circle cx="340.3" cy="431.0" r="2.4"/><circle cx="342.6" cy="434.4" r="2.4"/><circle cx="350.4" cy="435.7" r="2.4"/><circle cx="352.7" cy="439.2" r="2.4"/><circle cx="403.2" cy="462.9" r="2.4"/><circle cx="412.4" cy="464.6" r="2.4"/><circle cx="416.1" cy="468.9" r="2.4"/><circle cx="425.5" cy="470.7" r="2.4"/><circle cx="429.1" cy="475.0" r="2.4"/><circle cx="438.5" cy="476.8" r="2.4"/><circle cx="338.0" cy="427.6" r="2.4"/><circle cx="345.9" cy="428.9" r="2.4"/><circle cx="348.1" cy="432.3" r="2.4"/><circle cx="356.0" cy="433.5" r="2.4"/><circle cx="358.3" cy="437.0" r="2.4"/><circle cx="408.7" cy="460.4" r="2.4"/><circle cx="418.0" cy="462.2" r="2.4"/><circle cx="421.7" cy="466.4" r="2.4"/><circle cx="431.1" cy="468.2" r="2.4"/><circle cx="434.8" cy="472.5" r="2.4"/><circle cx="444.2" cy="474.3" r="2.4"/><circle cx="343.6" cy="425.5" r="2.4"/><circle cx="351.4" cy="426.7" r="2.4"/><circle cx="353.7" cy="430.1" r="2.4"/><circle cx="361.5" cy="431.3" r="2.4"/><circle cx="363.7" cy="434.7" r="2.4"/><circle cx="414.1" cy="457.9" r="2.4"/><circle cx="423.5" cy="459.7" r="2.4"/><circle cx="427.3" cy="463.9" r="2.4"/><circle cx="436.7" cy="465.7" r="2.4"/><circle cx="440.5" cy="470.0" r="2.4"/><circle cx="449.9" cy="471.8" r="2.4"/><circle cx="349.1" cy="423.4" r="2.4"/><circle cx="356.9" cy="424.6" r="2.4"/><circle cx="359.2" cy="428.0" r="2.4"/><circle cx="366.9" cy="429.2" r="2.4"/><circle cx="369.2" cy="432.5" r="2.4"/><circle cx="419.5" cy="455.4" r="2.4"/><circle cx="428.9" cy="457.2" r="2.4"/><circle cx="432.8" cy="461.5" r="2.4"/><circle cx="442.3" cy="463.3" r="2.4"/><circle cx="446.1" cy="467.5" r="2.4"/><circle cx="455.6" cy="469.3" r="2.4"/><circle cx="354.6" cy="421.3" r="2.4"/><circle cx="362.3" cy="422.5" r="2.4"/><circle cx="364.6" cy="425.8" r="2.4"/><circle cx="372.3" cy="427.0" r="2.4"/><circle cx="374.6" cy="430.3" r="2.4"/><circle cx="424.9" cy="453.0" r="2.4"/><circle cx="434.3" cy="454.8" r="2.4"/><circle cx="438.3" cy="459.0" r="2.4"/><circle cx="447.8" cy="460.8" r="2.4"/><circle cx="451.7" cy="465.1" r="2.4"/><circle cx="461.2" cy="466.9" r="2.4"/><circle cx="360.1" cy="419.3" r="2.4"/><circle cx="367.7" cy="420.5" r="2.4"/><circle cx="370.0" cy="423.7" r="2.4"/><circle cx="377.7" cy="424.9" r="2.4"/><circle cx="380.0" cy="428.2" r="2.4"/><circle cx="430.2" cy="450.6" r="2.4"/><circle cx="439.7" cy="452.4" r="2.4"/><circle cx="443.8" cy="456.6" r="2.4"/><circle cx="453.2" cy="458.4" r="2.4"/><circle cx="457.3" cy="462.6" r="2.4"/><circle cx="466.8" cy="464.4" r="2.4"/><circle cx="365.5" cy="417.3" r="2.4"/><circle cx="373.1" cy="418.4" r="2.4"/><circle cx="375.4" cy="421.6" r="2.4"/><circle cx="383.0" cy="422.8" r="2.4"/><circle cx="385.3" cy="426.0" r="2.4"/><circle cx="435.5" cy="448.2" r="2.4"/><circle cx="445.0" cy="450.0" r="2.4"/><circle cx="449.1" cy="454.2" r="2.4"/><circle cx="458.7" cy="456.0" r="2.4"/><circle cx="462.8" cy="460.2" r="2.4"/><circle cx="472.4" cy="462.0" r="2.4"/><circle cx="370.8" cy="415.2" r="2.4"/><circle cx="378.4" cy="416.4" r="2.4"/><circle cx="380.7" cy="419.6" r="2.4"/><circle cx="388.2" cy="420.7" r="2.4"/><circle cx="390.5" cy="423.9" r="2.4"/><circle cx="440.8" cy="445.8" r="2.4"/><circle cx="450.3" cy="447.6" r="2.4"/><circle cx="454.5" cy="451.8" r="2.4"/><circle cx="464.1" cy="453.6" r="2.4"/><circle cx="468.2" cy="457.8" r="2.4"/><circle cx="477.8" cy="459.6" r="2.4"/><circle cx="376.1" cy="413.2" r="2.4"/><circle cx="383.7" cy="414.4" r="2.4"/><circle cx="386.0" cy="417.5" r="2.4"/><circle cx="393.5" cy="418.6" r="2.4"/><circle cx="395.8" cy="421.7" r="2.4"/><circle cx="446.0" cy="443.5" r="2.4"/><circle cx="455.5" cy="445.3" r="2.4"/><circle cx="459.8" cy="449.5" r="2.4"/><circle cx="469.4" cy="451.3" r="2.4"/><circle cx="473.6" cy="455.4" r="2.4"/><circle cx="483.3" cy="457.3" r="2.4"/><circle cx="381.4" cy="411.3" r="2.4"/><circle cx="388.9" cy="412.4" r="2.4"/><circle cx="391.2" cy="415.4" r="2.4"/><circle cx="398.7" cy="416.5" r="2.4"/><circle cx="401.0" cy="419.6" r="2.4"/><circle cx="451.1" cy="441.1" r="2.4"/><circle cx="460.7" cy="443.0" r="2.4"/><circle cx="465.1" cy="447.1" r="2.4"/><circle cx="474.7" cy="448.9" r="2.4"/><circle cx="479.0" cy="453.1" r="2.4"/><circle cx="488.7" cy="454.9" r="2.4"/><circle cx="386.6" cy="409.3" r="2.4"/><circle cx="394.1" cy="410.4" r="2.4"/><circle cx="396.4" cy="413.4" r="2.4"/><circle cx="403.8" cy="414.5" r="2.4"/><circle cx="406.1" cy="417.6" r="2.4"/><circle cx="456.2" cy="438.8" r="2.4"/><circle cx="465.8" cy="440.6" r="2.4"/><circle cx="470.3" cy="444.8" r="2.4"/><circle cx="479.9" cy="446.6" r="2.4"/><circle cx="484.4" cy="450.7" r="2.4"/><circle cx="494.1" cy="452.6" r="2.4"/><circle cx="391.8" cy="407.3" r="2.4"/><circle cx="399.2" cy="408.4" r="2.4"/><circle cx="401.5" cy="411.4" r="2.4"/><circle cx="408.9" cy="412.4" r="2.4"/><circle cx="411.2" cy="415.5" r="2.4"/><circle cx="461.3" cy="436.5" r="2.4"/><circle cx="470.9" cy="438.3" r="2.4"/><circle cx="475.5" cy="442.5" r="2.4"/><circle cx="485.2" cy="444.3" r="2.4"/><circle cx="489.6" cy="448.4" r="2.4"/><circle cx="499.4" cy="450.2" r="2.4"/><circle cx="397.0" cy="405.4" r="2.4"/><circle cx="404.4" cy="406.4" r="2.4"/><circle cx="406.6" cy="409.4" r="2.4"/><circle cx="414.0" cy="410.4" r="2.4"/><circle cx="416.3" cy="413.4" r="2.4"/><circle cx="466.3" cy="434.2" r="2.4"/><circle cx="476.0" cy="436.1" r="2.4"/><circle cx="480.6" cy="440.2" r="2.4"/><circle cx="490.3" cy="442.0" r="2.4"/><circle cx="494.9" cy="446.1" r="2.4"/><circle cx="504.7" cy="447.9" r="2.4"/><circle cx="402.1" cy="403.5" r="2.4"/><circle cx="409.4" cy="404.5" r="2.4"/><circle cx="411.7" cy="407.4" r="2.4"/><circle cx="419.0" cy="408.4" r="2.4"/><circle cx="421.3" cy="411.4" r="2.4"/><circle cx="471.3" cy="432.0" r="2.4"/><circle cx="481.0" cy="433.8" r="2.4"/><circle cx="485.7" cy="437.9" r="2.4"/><circle cx="495.5" cy="439.7" r="2.4"/><circle cx="500.1" cy="443.8" r="2.4"/><circle cx="509.9" cy="445.7" r="2.4"/><circle cx="407.2" cy="401.6" r="2.4"/><circle cx="414.5" cy="402.5" r="2.4"/><circle cx="416.7" cy="405.5" r="2.4"/><circle cx="424.0" cy="406.4" r="2.4"/><circle cx="426.3" cy="409.4" r="2.4"/><circle cx="476.2" cy="429.7" r="2.4"/><circle cx="486.0" cy="431.6" r="2.4"/><circle cx="490.8" cy="435.6" r="2.4"/><circle cx="500.6" cy="437.5" r="2.4"/><circle cx="505.3" cy="441.6" r="2.4"/><circle cx="515.1" cy="443.4" r="2.4"/><circle cx="412.2" cy="399.7" r="2.4"/><circle cx="419.5" cy="400.6" r="2.4"/><circle cx="421.7" cy="403.5" r="2.4"/><circle cx="429.0" cy="404.4" r="2.4"/><circle cx="431.3" cy="407.4" r="2.4"/><circle cx="481.1" cy="427.5" r="2.4"/><circle cx="490.9" cy="429.3" r="2.4"/><circle cx="495.8" cy="433.4" r="2.4"/><circle cx="505.6" cy="435.2" r="2.4"/><circle cx="510.4" cy="439.3" r="2.4"/><circle cx="520.3" cy="441.1" r="2.4"/><circle cx="417.2" cy="397.8" r="2.4"/><circle cx="424.4" cy="398.7" r="2.4"/><circle cx="426.7" cy="401.6" r="2.4"/><circle cx="433.9" cy="402.5" r="2.4"/><circle cx="436.2" cy="405.4" r="2.4"/><circle cx="486.0" cy="425.3" r="2.4"/><circle cx="495.8" cy="427.1" r="2.4"/><circle cx="500.7" cy="431.2" r="2.4"/><circle cx="510.6" cy="433.0" r="2.4"/><circle cx="515.5" cy="437.1" r="2.4"/><circle cx="525.4" cy="438.9" r="2.4"/><circle cx="422.2" cy="395.9" r="2.4"/><circle cx="429.3" cy="396.8" r="2.4"/><circle cx="431.6" cy="399.7" r="2.4"/><circle cx="438.8" cy="400.6" r="2.4"/><circle cx="441.0" cy="403.4" r="2.4"/><circle cx="490.8" cy="423.1" r="2.4"/><circle cx="500.7" cy="424.9" r="2.4"/><circle cx="505.7" cy="429.0" r="2.4"/><circle cx="515.6" cy="430.8" r="2.4"/><circle cx="520.5" cy="434.9" r="2.4"/><circle cx="530.5" cy="436.7" r="2.4"/></g>
<g fill="#ff4436" opacity="0.65"><circle cx="30.7" cy="542.2" r="1.8"/><circle cx="40.6" cy="544.9" r="1.8"/><circle cx="42.2" cy="550.7" r="1.8"/><circle cx="52.1" cy="553.4" r="1.8"/><circle cx="53.7" cy="559.3" r="1.8"/><circle cx="104.2" cy="596.9" r="1.8"/><circle cx="112.5" cy="598.1" r="1.8"/><circle cx="112.5" cy="603.1" r="1.8"/><circle cx="120.8" cy="604.3" r="1.8"/><circle cx="120.7" cy="609.2" r="1.8"/><circle cx="129.1" cy="610.5" r="1.8"/><circle cx="39.0" cy="539.1" r="1.8"/><circle cx="48.8" cy="541.7" r="1.8"/><circle cx="50.5" cy="547.5" r="1.8"/><circle cx="60.3" cy="550.1" r="1.8"/><circle cx="61.9" cy="555.9" r="1.8"/><circle cx="112.4" cy="593.2" r="1.8"/><circle cx="120.8" cy="594.4" r="1.8"/><circle cx="120.8" cy="599.4" r="1.8"/><circle cx="129.2" cy="600.6" r="1.8"/><circle cx="129.2" cy="605.5" r="1.8"/><circle cx="137.6" cy="606.8" r="1.8"/><circle cx="47.2" cy="536.0" r="1.8"/><circle cx="57.0" cy="538.6" r="1.8"/><circle cx="58.6" cy="544.3" r="1.8"/><circle cx="68.4" cy="546.9" r="1.8"/><circle cx="70.1" cy="552.7" r="1.8"/><circle cx="120.6" cy="589.5" r="1.8"/><circle cx="128.9" cy="590.8" r="1.8"/><circle cx="129.1" cy="595.7" r="1.8"/><circle cx="137.5" cy="596.9" r="1.8"/><circle cx="137.6" cy="601.9" r="1.8"/><circle cx="146.0" cy="603.1" r="1.8"/><circle cx="55.3" cy="532.9" r="1.8"/><circle cx="65.0" cy="535.5" r="1.8"/><circle cx="66.7" cy="541.2" r="1.8"/><circle cx="76.4" cy="543.7" r="1.8"/><circle cx="78.1" cy="549.4" r="1.8"/><circle cx="128.7" cy="585.8" r="1.8"/><circle cx="137.0" cy="587.1" r="1.8"/><circle cx="137.3" cy="592.0" r="1.8"/><circle cx="145.7" cy="593.3" r="1.8"/><circle cx="145.9" cy="598.2" r="1.8"/><circle cx="154.3" cy="599.5" r="1.8"/><circle cx="63.3" cy="529.9" r="1.8"/><circle cx="73.0" cy="532.4" r="1.8"/><circle cx="74.7" cy="538.0" r="1.8"/><circle cx="84.4" cy="540.5" r="1.8"/><circle cx="86.1" cy="546.2" r="1.8"/><circle cx="136.7" cy="582.2" r="1.8"/><circle cx="145.1" cy="583.5" r="1.8"/><circle cx="145.4" cy="588.4" r="1.8"/><circle cx="153.8" cy="589.7" r="1.8"/><circle cx="154.1" cy="594.6" r="1.8"/><circle cx="162.5" cy="595.9" r="1.8"/><circle cx="71.3" cy="526.9" r="1.8"/><circle cx="80.9" cy="529.4" r="1.8"/><circle cx="82.6" cy="534.9" r="1.8"/><circle cx="92.3" cy="537.4" r="1.8"/><circle cx="94.0" cy="543.0" r="1.8"/><circle cx="144.6" cy="578.6" r="1.8"/><circle cx="153.0" cy="580.0" r="1.8"/><circle cx="153.4" cy="584.8" r="1.8"/><circle cx="161.8" cy="586.2" r="1.8"/><circle cx="162.2" cy="591.0" r="1.8"/><circle cx="170.7" cy="592.4" r="1.8"/><circle cx="79.1" cy="524.0" r="1.8"/><circle cx="88.7" cy="526.4" r="1.8"/><circle cx="90.5" cy="531.9" r="1.8"/><circle cx="100.1" cy="534.3" r="1.8"/><circle cx="101.8" cy="539.8" r="1.8"/><circle cx="152.5" cy="575.1" r="1.8"/><circle cx="160.9" cy="576.4" r="1.8"/><circle cx="161.4" cy="581.3" r="1.8"/><circle cx="169.8" cy="582.6" r="1.8"/><circle cx="170.3" cy="587.5" r="1.8"/><circle cx="178.8" cy="588.9" r="1.8"/><circle cx="86.9" cy="521.0" r="1.8"/><circle cx="96.5" cy="523.4" r="1.8"/><circle cx="98.3" cy="528.8" r="1.8"/><circle cx="107.8" cy="531.2" r="1.8"/><circle cx="109.6" cy="536.6" r="1.8"/><circle cx="160.3" cy="571.6" r="1.8"/><circle cx="168.7" cy="573.0" r="1.8"/><circle cx="169.3" cy="577.8" r="1.8"/><circle cx="177.7" cy="579.2" r="1.8"/><circle cx="178.3" cy="584.0" r="1.8"/><circle cx="186.8" cy="585.4" r="1.8"/><circle cx="94.7" cy="518.1" r="1.8"/><circle cx="104.1" cy="520.5" r="1.8"/><circle cx="106.0" cy="525.8" r="1.8"/><circle cx="115.4" cy="528.2" r="1.8"/><circle cx="117.3" cy="533.5" r="1.8"/><circle cx="168.0" cy="568.1" r="1.8"/><circle cx="176.4" cy="569.5" r="1.8"/><circle cx="177.1" cy="574.3" r="1.8"/><circle cx="185.5" cy="575.7" r="1.8"/><circle cx="186.2" cy="580.5" r="1.8"/><circle cx="194.7" cy="581.9" r="1.8"/><circle cx="102.3" cy="515.2" r="1.8"/><circle cx="111.8" cy="517.6" r="1.8"/><circle cx="113.6" cy="522.8" r="1.8"/><circle cx="123.0" cy="525.1" r="1.8"/><circle cx="124.9" cy="530.5" r="1.8"/><circle cx="175.6" cy="564.7" r="1.8"/><circle cx="184.0" cy="566.1" r="1.8"/><circle cx="184.8" cy="570.9" r="1.8"/><circle cx="193.3" cy="572.3" r="1.8"/><circle cx="194.0" cy="577.1" r="1.8"/><circle cx="202.5" cy="578.5" r="1.8"/><circle cx="109.9" cy="512.4" r="1.8"/><circle cx="119.3" cy="514.7" r="1.8"/><circle cx="121.2" cy="519.9" r="1.8"/><circle cx="130.5" cy="522.2" r="1.8"/><circle cx="132.4" cy="527.4" r="1.8"/><circle cx="183.1" cy="561.3" r="1.8"/><circle cx="191.6" cy="562.7" r="1.8"/><circle cx="192.5" cy="567.5" r="1.8"/><circle cx="200.9" cy="568.9" r="1.8"/><circle cx="201.8" cy="573.7" r="1.8"/><circle cx="210.3" cy="575.1" r="1.8"/><circle cx="117.4" cy="509.5" r="1.8"/><circle cx="126.8" cy="511.8" r="1.8"/><circle cx="128.6" cy="517.0" r="1.8"/><circle cx="138.0" cy="519.2" r="1.8"/><circle cx="139.9" cy="524.4" r="1.8"/><circle cx="190.6" cy="557.9" r="1.8"/><circle cx="199.1" cy="559.3" r="1.8"/><circle cx="200.0" cy="564.1" r="1.8"/><circle cx="208.5" cy="565.5" r="1.8"/><circle cx="209.5" cy="570.3" r="1.8"/><circle cx="218.0" cy="571.8" r="1.8"/><circle cx="124.9" cy="506.7" r="1.8"/><circle cx="134.2" cy="509.0" r="1.8"/><circle cx="136.1" cy="514.1" r="1.8"/><circle cx="145.3" cy="516.3" r="1.8"/><circle cx="147.3" cy="521.4" r="1.8"/><circle cx="198.0" cy="554.5" r="1.8"/><circle cx="206.5" cy="556.0" r="1.8"/><circle cx="207.6" cy="560.8" r="1.8"/><circle cx="216.1" cy="562.2" r="1.8"/><circle cx="217.1" cy="567.0" r="1.8"/><circle cx="225.6" cy="568.4" r="1.8"/><circle cx="132.2" cy="504.0" r="1.8"/><circle cx="141.5" cy="506.2" r="1.8"/><circle cx="143.4" cy="511.2" r="1.8"/><circle cx="152.7" cy="513.3" r="1.8"/><circle cx="154.6" cy="518.4" r="1.8"/><circle cx="205.4" cy="551.2" r="1.8"/><circle cx="213.9" cy="552.7" r="1.8"/><circle cx="215.0" cy="557.4" r="1.8"/><circle cx="223.5" cy="558.9" r="1.8"/><circle cx="224.6" cy="563.7" r="1.8"/><circle cx="233.2" cy="565.1" r="1.8"/><circle cx="139.6" cy="501.2" r="1.8"/><circle cx="148.8" cy="503.4" r="1.8"/><circle cx="150.7" cy="508.3" r="1.8"/><circle cx="159.9" cy="510.5" r="1.8"/><circle cx="161.9" cy="515.5" r="1.8"/><circle cx="212.6" cy="547.9" r="1.8"/><circle cx="221.1" cy="549.4" r="1.8"/><circle cx="222.4" cy="554.2" r="1.8"/><circle cx="230.9" cy="555.6" r="1.8"/><circle cx="232.1" cy="560.4" r="1.8"/><circle cx="240.7" cy="561.9" r="1.8"/><circle cx="146.8" cy="498.5" r="1.8"/><circle cx="156.0" cy="500.6" r="1.8"/><circle cx="157.9" cy="505.5" r="1.8"/><circle cx="167.1" cy="507.6" r="1.8"/><circle cx="169.0" cy="512.6" r="1.8"/><circle cx="219.8" cy="544.7" r="1.8"/><circle cx="228.4" cy="546.2" r="1.8"/><circle cx="229.7" cy="550.9" r="1.8"/><circle cx="238.2" cy="552.4" r="1.8"/><circle cx="239.5" cy="557.1" r="1.8"/><circle cx="248.1" cy="558.6" r="1.8"/><circle cx="154.0" cy="495.8" r="1.8"/><circle cx="163.1" cy="497.9" r="1.8"/><circle cx="165.1" cy="502.7" r="1.8"/><circle cx="174.2" cy="504.8" r="1.8"/><circle cx="176.2" cy="509.7" r="1.8"/><circle cx="227.0" cy="541.5" r="1.8"/><circle cx="235.5" cy="543.0" r="1.8"/><circle cx="236.9" cy="547.7" r="1.8"/><circle cx="245.5" cy="549.2" r="1.8"/><circle cx="246.9" cy="553.9" r="1.8"/><circle cx="255.5" cy="555.4" r="1.8"/><circle cx="161.1" cy="493.1" r="1.8"/><circle cx="170.2" cy="495.2" r="1.8"/><circle cx="172.2" cy="500.0" r="1.8"/><circle cx="181.2" cy="502.0" r="1.8"/><circle cx="183.2" cy="506.8" r="1.8"/><circle cx="234.0" cy="538.3" r="1.8"/><circle cx="242.6" cy="539.8" r="1.8"/><circle cx="244.1" cy="544.5" r="1.8"/><circle cx="252.7" cy="546.0" r="1.8"/><circle cx="254.1" cy="550.7" r="1.8"/><circle cx="262.8" cy="552.2" r="1.8"/><circle cx="168.1" cy="490.5" r="1.8"/><circle cx="177.2" cy="492.5" r="1.8"/><circle cx="179.2" cy="497.2" r="1.8"/><circle cx="188.2" cy="499.2" r="1.8"/><circle cx="190.2" cy="504.0" r="1.8"/><circle cx="241.0" cy="535.1" r="1.8"/><circle cx="249.6" cy="536.6" r="1.8"/><circle cx="251.2" cy="541.3" r="1.8"/><circle cx="259.8" cy="542.9" r="1.8"/><circle cx="261.3" cy="547.5" r="1.8"/><circle cx="270.0" cy="549.1" r="1.8"/><circle cx="175.1" cy="487.8" r="1.8"/><circle cx="184.1" cy="489.8" r="1.8"/><circle cx="186.1" cy="494.5" r="1.8"/><circle cx="195.1" cy="496.5" r="1.8"/><circle cx="197.2" cy="501.2" r="1.8"/><circle cx="248.0" cy="532.0" r="1.8"/><circle cx="256.6" cy="533.5" r="1.8"/><circle cx="258.2" cy="538.2" r="1.8"/><circle cx="266.9" cy="539.7" r="1.8"/><circle cx="268.5" cy="544.4" r="1.8"/><circle cx="277.2" cy="546.0" r="1.8"/><circle cx="182.1" cy="485.2" r="1.8"/><circle cx="191.0" cy="487.2" r="1.8"/><circle cx="193.0" cy="491.8" r="1.8"/><circle cx="202.0" cy="493.7" r="1.8"/><circle cx="204.0" cy="498.4" r="1.8"/><circle cx="254.8" cy="528.9" r="1.8"/><circle cx="263.5" cy="530.4" r="1.8"/><circle cx="265.2" cy="535.1" r="1.8"/><circle cx="273.9" cy="536.6" r="1.8"/><circle cx="275.6" cy="541.3" r="1.8"/><circle cx="284.3" cy="542.9" r="1.8"/><circle cx="188.9" cy="482.6" r="1.8"/><circle cx="197.8" cy="484.6" r="1.8"/><circle cx="199.9" cy="489.1" r="1.8"/><circle cx="208.7" cy="491.0" r="1.8"/><circle cx="210.8" cy="495.6" r="1.8"/><circle cx="261.6" cy="525.8" r="1.8"/><circle cx="270.3" cy="527.4" r="1.8"/><circle cx="272.1" cy="532.0" r="1.8"/><circle cx="280.8" cy="533.6" r="1.8"/><circle cx="282.6" cy="538.2" r="1.8"/><circle cx="291.3" cy="539.8" r="1.8"/><circle cx="195.7" cy="480.1" r="1.8"/><circle cx="204.6" cy="482.0" r="1.8"/><circle cx="206.7" cy="486.5" r="1.8"/><circle cx="215.5" cy="488.4" r="1.8"/><circle cx="217.6" cy="492.9" r="1.8"/><circle cx="268.4" cy="522.7" r="1.8"/><circle cx="277.1" cy="524.3" r="1.8"/><circle cx="279.0" cy="529.0" r="1.8"/><circle cx="287.7" cy="530.5" r="1.8"/><circle cx="289.6" cy="535.2" r="1.8"/><circle cx="298.3" cy="536.8" r="1.8"/><circle cx="202.5" cy="477.5" r="1.8"/><circle cx="211.3" cy="479.4" r="1.8"/><circle cx="213.4" cy="483.9" r="1.8"/><circle cx="222.1" cy="485.7" r="1.8"/><circle cx="224.3" cy="490.2" r="1.8"/><circle cx="275.1" cy="519.7" r="1.8"/><circle cx="283.8" cy="521.3" r="1.8"/><circle cx="285.8" cy="525.9" r="1.8"/><circle cx="294.5" cy="527.5" r="1.8"/><circle cx="296.4" cy="532.1" r="1.8"/><circle cx="305.2" cy="533.7" r="1.8"/><circle cx="209.2" cy="475.0" r="1.8"/><circle cx="217.9" cy="476.9" r="1.8"/><circle cx="220.0" cy="481.3" r="1.8"/><circle cx="228.8" cy="483.1" r="1.8"/><circle cx="230.9" cy="487.5" r="1.8"/><circle cx="281.7" cy="516.7" r="1.8"/><circle cx="290.4" cy="518.3" r="1.8"/><circle cx="292.5" cy="522.9" r="1.8"/><circle cx="301.3" cy="524.5" r="1.8"/><circle cx="303.3" cy="529.1" r="1.8"/><circle cx="312.1" cy="530.8" r="1.8"/><circle cx="215.8" cy="472.5" r="1.8"/><circle cx="224.5" cy="474.3" r="1.8"/><circle cx="226.6" cy="478.7" r="1.8"/><circle cx="235.3" cy="480.5" r="1.8"/><circle cx="237.5" cy="484.8" r="1.8"/><circle cx="288.3" cy="513.8" r="1.8"/><circle cx="297.0" cy="515.4" r="1.8"/><circle cx="299.2" cy="520.0" r="1.8"/><circle cx="307.9" cy="521.6" r="1.8"/><circle cx="310.1" cy="526.2" r="1.8"/><circle cx="318.9" cy="527.8" r="1.8"/><circle cx="222.4" cy="470.0" r="1.8"/><circle cx="231.0" cy="471.8" r="1.8"/><circle cx="233.2" cy="476.1" r="1.8"/><circle cx="241.8" cy="477.9" r="1.8"/><circle cx="244.0" cy="482.2" r="1.8"/><circle cx="294.8" cy="510.8" r="1.8"/><circle cx="303.5" cy="512.5" r="1.8"/><circle cx="305.8" cy="517.0" r="1.8"/><circle cx="314.6" cy="518.7" r="1.8"/><circle cx="316.8" cy="523.2" r="1.8"/><circle cx="325.6" cy="524.9" r="1.8"/><circle cx="228.9" cy="467.6" r="1.8"/><circle cx="237.5" cy="469.3" r="1.8"/><circle cx="239.7" cy="473.6" r="1.8"/><circle cx="248.3" cy="475.3" r="1.8"/><circle cx="250.4" cy="479.6" r="1.8"/><circle cx="301.2" cy="507.9" r="1.8"/><circle cx="310.0" cy="509.5" r="1.8"/><circle cx="312.3" cy="514.1" r="1.8"/><circle cx="321.2" cy="515.7" r="1.8"/><circle cx="323.4" cy="520.3" r="1.8"/><circle cx="332.3" cy="521.9" r="1.8"/><circle cx="235.4" cy="465.2" r="1.8"/><circle cx="243.9" cy="466.9" r="1.8"/><circle cx="246.1" cy="471.1" r="1.8"/><circle cx="254.6" cy="472.8" r="1.8"/><circle cx="256.8" cy="477.0" r="1.8"/><circle cx="307.6" cy="505.0" r="1.8"/><circle cx="316.4" cy="506.7" r="1.8"/><circle cx="318.8" cy="511.2" r="1.8"/><circle cx="327.7" cy="512.9" r="1.8"/><circle cx="330.0" cy="517.4" r="1.8"/><circle cx="339.0" cy="519.1" r="1.8"/><circle cx="241.8" cy="462.7" r="1.8"/><circle cx="250.3" cy="464.4" r="1.8"/><circle cx="252.5" cy="468.6" r="1.8"/><circle cx="261.0" cy="470.2" r="1.8"/><circle cx="263.2" cy="474.4" r="1.8"/><circle cx="313.9" cy="502.1" r="1.8"/><circle cx="322.8" cy="503.8" r="1.8"/><circle cx="325.2" cy="508.3" r="1.8"/><circle cx="334.1" cy="510.0" r="1.8"/><circle cx="336.6" cy="514.5" r="1.8"/><circle cx="345.5" cy="516.2" r="1.8"/><circle cx="248.1" cy="460.4" r="1.8"/><circle cx="256.6" cy="462.0" r="1.8"/><circle cx="258.8" cy="466.1" r="1.8"/><circle cx="267.2" cy="467.8" r="1.8"/><circle cx="269.4" cy="471.9" r="1.8"/><circle cx="320.2" cy="499.3" r="1.8"/><circle cx="329.1" cy="501.0" r="1.8"/><circle cx="331.6" cy="505.5" r="1.8"/><circle cx="340.5" cy="507.2" r="1.8"/><circle cx="343.1" cy="511.7" r="1.8"/><circle cx="352.0" cy="513.4" r="1.8"/><circle cx="254.4" cy="458.0" r="1.8"/><circle cx="262.9" cy="459.6" r="1.8"/><circle cx="265.0" cy="463.7" r="1.8"/><circle cx="273.5" cy="465.3" r="1.8"/><circle cx="275.7" cy="469.4" r="1.8"/><circle cx="326.4" cy="496.5" r="1.8"/><circle cx="335.3" cy="498.2" r="1.8"/><circle cx="338.0" cy="502.7" r="1.8"/><circle cx="346.9" cy="504.4" r="1.8"/><circle cx="349.5" cy="508.9" r="1.8"/><circle cx="358.5" cy="510.5" r="1.8"/><circle cx="260.7" cy="455.6" r="1.8"/><circle cx="269.1" cy="457.2" r="1.8"/><circle cx="271.3" cy="461.2" r="1.8"/><circle cx="279.6" cy="462.8" r="1.8"/><circle cx="281.8" cy="466.8" r="1.8"/><circle cx="332.6" cy="493.7" r="1.8"/><circle cx="341.5" cy="495.4" r="1.8"/><circle cx="344.2" cy="499.9" r="1.8"/><circle cx="353.2" cy="501.6" r="1.8"/><circle cx="355.9" cy="506.1" r="1.8"/><circle cx="364.9" cy="507.7" r="1.8"/><circle cx="266.9" cy="453.3" r="1.8"/><circle cx="275.2" cy="454.9" r="1.8"/><circle cx="277.4" cy="458.8" r="1.8"/><circle cx="285.7" cy="460.4" r="1.8"/><circle cx="288.0" cy="464.4" r="1.8"/><circle cx="338.7" cy="490.9" r="1.8"/><circle cx="347.6" cy="492.7" r="1.8"/><circle cx="350.4" cy="497.1" r="1.8"/><circle cx="359.4" cy="498.8" r="1.8"/><circle cx="362.2" cy="503.3" r="1.8"/><circle cx="371.3" cy="505.0" r="1.8"/><circle cx="273.0" cy="451.0" r="1.8"/><circle cx="281.3" cy="452.6" r="1.8"/><circle cx="283.5" cy="456.4" r="1.8"/><circle cx="291.8" cy="458.0" r="1.8"/><circle cx="294.0" cy="461.9" r="1.8"/><circle cx="344.7" cy="488.2" r="1.8"/><circle cx="353.7" cy="489.9" r="1.8"/><circle cx="356.6" cy="494.4" r="1.8"/><circle cx="365.6" cy="496.1" r="1.8"/><circle cx="368.5" cy="500.5" r="1.8"/><circle cx="377.6" cy="502.2" r="1.8"/><circle cx="279.1" cy="448.7" r="1.8"/><circle cx="287.4" cy="450.2" r="1.8"/><circle cx="289.6" cy="454.1" r="1.8"/><circle cx="297.8" cy="455.6" r="1.8"/><circle cx="300.1" cy="459.5" r="1.8"/><circle cx="350.7" cy="485.5" r="1.8"/><circle cx="359.7" cy="487.2" r="1.8"/><circle cx="362.7" cy="491.6" r="1.8"/><circle cx="371.8" cy="493.4" r="1.8"/><circle cx="374.7" cy="497.8" r="1.8"/><circle cx="383.8" cy="499.5" r="1.8"/><circle cx="285.1" cy="446.4" r="1.8"/><circle cx="293.4" cy="447.9" r="1.8"/><circle cx="295.6" cy="451.7" r="1.8"/><circle cx="303.8" cy="453.2" r="1.8"/><circle cx="306.0" cy="457.0" r="1.8"/><circle cx="356.7" cy="482.8" r="1.8"/><circle cx="365.7" cy="484.5" r="1.8"/><circle cx="368.8" cy="488.9" r="1.8"/><circle cx="377.9" cy="490.7" r="1.8"/><circle cx="380.9" cy="495.1" r="1.8"/><circle cx="390.0" cy="496.8" r="1.8"/><circle cx="291.1" cy="444.2" r="1.8"/><circle cx="299.3" cy="445.6" r="1.8"/><circle cx="301.5" cy="449.4" r="1.8"/><circle cx="309.7" cy="450.9" r="1.8"/><circle cx="312.0" cy="454.6" r="1.8"/><circle cx="362.6" cy="480.1" r="1.8"/><circle cx="371.6" cy="481.9" r="1.8"/><circle cx="374.8" cy="486.3" r="1.8"/><circle cx="383.9" cy="488.0" r="1.8"/><circle cx="387.0" cy="492.4" r="1.8"/><circle cx="396.1" cy="494.1" r="1.8"/><circle cx="297.1" cy="441.9" r="1.8"/><circle cx="305.2" cy="443.4" r="1.8"/><circle cx="307.4" cy="447.1" r="1.8"/><circle cx="315.6" cy="448.5" r="1.8"/><circle cx="317.8" cy="452.3" r="1.8"/><circle cx="368.4" cy="477.5" r="1.8"/><circle cx="377.5" cy="479.2" r="1.8"/><circle cx="380.7" cy="483.6" r="1.8"/><circle cx="389.9" cy="485.4" r="1.8"/><circle cx="393.0" cy="489.7" r="1.8"/><circle cx="402.2" cy="491.5" r="1.8"/><circle cx="303.0" cy="439.7" r="1.8"/><circle cx="311.1" cy="441.1" r="1.8"/><circle cx="313.3" cy="444.8" r="1.8"/><circle cx="321.4" cy="446.2" r="1.8"/><circle cx="323.6" cy="449.9" r="1.8"/><circle cx="374.2" cy="474.9" r="1.8"/><circle cx="383.3" cy="476.6" r="1.8"/><circle cx="386.6" cy="481.0" r="1.8"/><circle cx="395.8" cy="482.7" r="1.8"/><circle cx="399.1" cy="487.1" r="1.8"/><circle cx="408.3" cy="488.8" r="1.8"/><circle cx="308.8" cy="437.5" r="1.8"/><circle cx="316.9" cy="438.9" r="1.8"/><circle cx="319.1" cy="442.5" r="1.8"/><circle cx="327.1" cy="443.9" r="1.8"/><circle cx="329.4" cy="447.6" r="1.8"/><circle cx="380.0" cy="472.2" r="1.8"/><circle cx="389.1" cy="474.0" r="1.8"/><circle cx="392.5" cy="478.4" r="1.8"/><circle cx="401.7" cy="480.1" r="1.8"/><circle cx="405.0" cy="484.5" r="1.8"/><circle cx="414.3" cy="486.2" r="1.8"/><circle cx="314.6" cy="435.3" r="1.8"/><circle cx="322.6" cy="436.7" r="1.8"/><circle cx="324.9" cy="440.3" r="1.8"/><circle cx="332.9" cy="441.6" r="1.8"/><circle cx="335.1" cy="445.3" r="1.8"/><circle cx="385.7" cy="469.7" r="1.8"/><circle cx="394.8" cy="471.4" r="1.8"/><circle cx="398.3" cy="475.8" r="1.8"/><circle cx="407.5" cy="477.5" r="1.8"/><circle cx="410.9" cy="481.9" r="1.8"/><circle cx="420.2" cy="483.6" r="1.8"/><circle cx="320.4" cy="433.2" r="1.8"/><circle cx="328.3" cy="434.5" r="1.8"/><circle cx="330.6" cy="438.1" r="1.8"/><circle cx="338.5" cy="439.4" r="1.8"/><circle cx="340.8" cy="442.9" r="1.8"/><circle cx="391.3" cy="467.1" r="1.8"/><circle cx="400.5" cy="468.9" r="1.8"/><circle cx="404.1" cy="473.2" r="1.8"/><circle cx="413.3" cy="475.0" r="1.8"/><circle cx="416.8" cy="479.3" r="1.8"/><circle cx="426.1" cy="481.1" r="1.8"/><circle cx="326.1" cy="431.0" r="1.8"/><circle cx="334.0" cy="432.3" r="1.8"/><circle cx="336.3" cy="435.8" r="1.8"/><circle cx="344.2" cy="437.1" r="1.8"/><circle cx="346.4" cy="440.7" r="1.8"/><circle cx="396.9" cy="464.6" r="1.8"/><circle cx="406.2" cy="466.4" r="1.8"/><circle cx="409.8" cy="470.7" r="1.8"/><circle cx="419.1" cy="472.4" r="1.8"/><circle cx="422.6" cy="476.7" r="1.8"/><circle cx="432.0" cy="478.5" r="1.8"/><circle cx="331.7" cy="428.9" r="1.8"/><circle cx="339.6" cy="430.2" r="1.8"/><circle cx="341.9" cy="433.6" r="1.8"/><circle cx="349.7" cy="434.9" r="1.8"/><circle cx="352.0" cy="438.4" r="1.8"/><circle cx="402.5" cy="462.1" r="1.8"/><circle cx="411.7" cy="463.8" r="1.8"/><circle cx="415.4" cy="468.1" r="1.8"/><circle cx="424.8" cy="469.9" r="1.8"/><circle cx="428.4" cy="474.2" r="1.8"/><circle cx="437.8" cy="476.0" r="1.8"/><circle cx="337.3" cy="426.8" r="1.8"/><circle cx="345.2" cy="428.1" r="1.8"/><circle cx="347.4" cy="431.5" r="1.8"/><circle cx="355.3" cy="432.7" r="1.8"/><circle cx="357.6" cy="436.2" r="1.8"/><circle cx="408.0" cy="459.6" r="1.8"/><circle cx="417.3" cy="461.4" r="1.8"/><circle cx="421.0" cy="465.6" r="1.8"/><circle cx="430.4" cy="467.4" r="1.8"/><circle cx="434.1" cy="471.7" r="1.8"/><circle cx="443.5" cy="473.5" r="1.8"/><circle cx="342.9" cy="424.7" r="1.8"/><circle cx="350.7" cy="425.9" r="1.8"/><circle cx="353.0" cy="429.3" r="1.8"/><circle cx="360.8" cy="430.5" r="1.8"/><circle cx="363.0" cy="433.9" r="1.8"/><circle cx="413.4" cy="457.1" r="1.8"/><circle cx="422.8" cy="458.9" r="1.8"/><circle cx="426.6" cy="463.1" r="1.8"/><circle cx="436.0" cy="464.9" r="1.8"/><circle cx="439.8" cy="469.2" r="1.8"/><circle cx="449.2" cy="471.0" r="1.8"/><circle cx="348.4" cy="422.6" r="1.8"/><circle cx="356.2" cy="423.8" r="1.8"/><circle cx="358.5" cy="427.2" r="1.8"/><circle cx="366.2" cy="428.4" r="1.8"/><circle cx="368.5" cy="431.7" r="1.8"/><circle cx="418.8" cy="454.6" r="1.8"/><circle cx="428.2" cy="456.4" r="1.8"/><circle cx="432.1" cy="460.7" r="1.8"/><circle cx="441.6" cy="462.5" r="1.8"/><circle cx="445.4" cy="466.7" r="1.8"/><circle cx="454.9" cy="468.5" r="1.8"/><circle cx="353.9" cy="420.5" r="1.8"/><circle cx="361.6" cy="421.7" r="1.8"/><circle cx="363.9" cy="425.0" r="1.8"/><circle cx="371.6" cy="426.2" r="1.8"/><circle cx="373.9" cy="429.5" r="1.8"/><circle cx="424.2" cy="452.2" r="1.8"/><circle cx="433.6" cy="454.0" r="1.8"/><circle cx="437.6" cy="458.2" r="1.8"/><circle cx="447.1" cy="460.0" r="1.8"/><circle cx="451.0" cy="464.3" r="1.8"/><circle cx="460.5" cy="466.1" r="1.8"/><circle cx="359.4" cy="418.5" r="1.8"/><circle cx="367.0" cy="419.7" r="1.8"/><circle cx="369.3" cy="422.9" r="1.8"/><circle cx="377.0" cy="424.1" r="1.8"/><circle cx="379.3" cy="427.4" r="1.8"/><circle cx="429.5" cy="449.8" r="1.8"/><circle cx="439.0" cy="451.6" r="1.8"/><circle cx="443.1" cy="455.8" r="1.8"/><circle cx="452.5" cy="457.6" r="1.8"/><circle cx="456.6" cy="461.8" r="1.8"/><circle cx="466.1" cy="463.6" r="1.8"/><circle cx="364.8" cy="416.5" r="1.8"/><circle cx="372.4" cy="417.6" r="1.8"/><circle cx="374.7" cy="420.8" r="1.8"/><circle cx="382.3" cy="422.0" r="1.8"/><circle cx="384.6" cy="425.2" r="1.8"/><circle cx="434.8" cy="447.4" r="1.8"/><circle cx="444.3" cy="449.2" r="1.8"/><circle cx="448.4" cy="453.4" r="1.8"/><circle cx="458.0" cy="455.2" r="1.8"/><circle cx="462.1" cy="459.4" r="1.8"/><circle cx="471.7" cy="461.2" r="1.8"/><circle cx="370.1" cy="414.4" r="1.8"/><circle cx="377.7" cy="415.6" r="1.8"/><circle cx="380.0" cy="418.8" r="1.8"/><circle cx="387.5" cy="419.9" r="1.8"/><circle cx="389.8" cy="423.1" r="1.8"/><circle cx="440.1" cy="445.0" r="1.8"/><circle cx="449.6" cy="446.8" r="1.8"/><circle cx="453.8" cy="451.0" r="1.8"/><circle cx="463.4" cy="452.8" r="1.8"/><circle cx="467.5" cy="457.0" r="1.8"/><circle cx="477.1" cy="458.8" r="1.8"/><circle cx="375.4" cy="412.4" r="1.8"/><circle cx="383.0" cy="413.6" r="1.8"/><circle cx="385.3" cy="416.7" r="1.8"/><circle cx="392.8" cy="417.8" r="1.8"/><circle cx="395.1" cy="420.9" r="1.8"/><circle cx="445.3" cy="442.7" r="1.8"/><circle cx="454.8" cy="444.5" r="1.8"/><circle cx="459.1" cy="448.7" r="1.8"/><circle cx="468.7" cy="450.5" r="1.8"/><circle cx="472.9" cy="454.6" r="1.8"/><circle cx="482.6" cy="456.5" r="1.8"/><circle cx="380.7" cy="410.5" r="1.8"/><circle cx="388.2" cy="411.6" r="1.8"/><circle cx="390.5" cy="414.6" r="1.8"/><circle cx="398.0" cy="415.7" r="1.8"/><circle cx="400.3" cy="418.8" r="1.8"/><circle cx="450.4" cy="440.3" r="1.8"/><circle cx="460.0" cy="442.2" r="1.8"/><circle cx="464.4" cy="446.3" r="1.8"/><circle cx="474.0" cy="448.1" r="1.8"/><circle cx="478.3" cy="452.3" r="1.8"/><circle cx="488.0" cy="454.1" r="1.8"/><circle cx="385.9" cy="408.5" r="1.8"/><circle cx="393.4" cy="409.6" r="1.8"/><circle cx="395.7" cy="412.6" r="1.8"/><circle cx="403.1" cy="413.7" r="1.8"/><circle cx="405.4" cy="416.8" r="1.8"/><circle cx="455.5" cy="438.0" r="1.8"/><circle cx="465.1" cy="439.8" r="1.8"/><circle cx="469.6" cy="444.0" r="1.8"/><circle cx="479.2" cy="445.8" r="1.8"/><circle cx="483.7" cy="449.9" r="1.8"/><circle cx="493.4" cy="451.8" r="1.8"/><circle cx="391.1" cy="406.5" r="1.8"/><circle cx="398.5" cy="407.6" r="1.8"/><circle cx="400.8" cy="410.6" r="1.8"/><circle cx="408.2" cy="411.6" r="1.8"/><circle cx="410.5" cy="414.7" r="1.8"/><circle cx="460.6" cy="435.7" r="1.8"/><circle cx="470.2" cy="437.5" r="1.8"/><circle cx="474.8" cy="441.7" r="1.8"/><circle cx="484.5" cy="443.5" r="1.8"/><circle cx="488.9" cy="447.6" r="1.8"/><circle cx="498.7" cy="449.4" r="1.8"/><circle cx="396.3" cy="404.6" r="1.8"/><circle cx="403.7" cy="405.6" r="1.8"/><circle cx="405.9" cy="408.6" r="1.8"/><circle cx="413.3" cy="409.6" r="1.8"/><circle cx="415.6" cy="412.6" r="1.8"/><circle cx="465.6" cy="433.4" r="1.8"/><circle cx="475.3" cy="435.3" r="1.8"/><circle cx="479.9" cy="439.4" r="1.8"/><circle cx="489.6" cy="441.2" r="1.8"/><circle cx="494.2" cy="445.3" r="1.8"/><circle cx="504.0" cy="447.1" r="1.8"/><circle cx="401.4" cy="402.7" r="1.8"/><circle cx="408.7" cy="403.7" r="1.8"/><circle cx="411.0" cy="406.6" r="1.8"/><circle cx="418.3" cy="407.6" r="1.8"/><circle cx="420.6" cy="410.6" r="1.8"/><circle cx="470.6" cy="431.2" r="1.8"/><circle cx="480.3" cy="433.0" r="1.8"/><circle cx="485.0" cy="437.1" r="1.8"/><circle cx="494.8" cy="438.9" r="1.8"/><circle cx="499.4" cy="443.0" r="1.8"/><circle cx="509.2" cy="444.9" r="1.8"/><circle cx="406.5" cy="400.8" r="1.8"/><circle cx="413.8" cy="401.7" r="1.8"/><circle cx="416.0" cy="404.7" r="1.8"/><circle cx="423.3" cy="405.6" r="1.8"/><circle cx="425.6" cy="408.6" r="1.8"/><circle cx="475.5" cy="428.9" r="1.8"/><circle cx="485.3" cy="430.8" r="1.8"/><circle cx="490.1" cy="434.8" r="1.8"/><circle cx="499.9" cy="436.7" r="1.8"/><circle cx="504.6" cy="440.8" r="1.8"/><circle cx="514.4" cy="442.6" r="1.8"/><circle cx="411.5" cy="398.9" r="1.8"/><circle cx="418.8" cy="399.8" r="1.8"/><circle cx="421.0" cy="402.7" r="1.8"/><circle cx="428.3" cy="403.6" r="1.8"/><circle cx="430.6" cy="406.6" r="1.8"/><circle cx="480.4" cy="426.7" r="1.8"/><circle cx="490.2" cy="428.5" r="1.8"/><circle cx="495.1" cy="432.6" r="1.8"/><circle cx="504.9" cy="434.4" r="1.8"/><circle cx="509.7" cy="438.5" r="1.8"/><circle cx="519.6" cy="440.3" r="1.8"/><circle cx="416.5" cy="397.0" r="1.8"/><circle cx="423.7" cy="397.9" r="1.8"/><circle cx="426.0" cy="400.8" r="1.8"/><circle cx="433.2" cy="401.7" r="1.8"/><circle cx="435.5" cy="404.6" r="1.8"/><circle cx="485.3" cy="424.5" r="1.8"/><circle cx="495.1" cy="426.3" r="1.8"/><circle cx="500.0" cy="430.4" r="1.8"/><circle cx="509.9" cy="432.2" r="1.8"/><circle cx="514.8" cy="436.3" r="1.8"/><circle cx="524.7" cy="438.1" r="1.8"/><circle cx="421.5" cy="395.1" r="1.8"/><circle cx="428.6" cy="396.0" r="1.8"/><circle cx="430.9" cy="398.9" r="1.8"/><circle cx="438.1" cy="399.8" r="1.8"/><circle cx="440.3" cy="402.6" r="1.8"/><circle cx="490.1" cy="422.3" r="1.8"/><circle cx="500.0" cy="424.1" r="1.8"/><circle cx="505.0" cy="428.2" r="1.8"/><circle cx="514.9" cy="430.0" r="1.8"/><circle cx="519.8" cy="434.1" r="1.8"/><circle cx="529.8" cy="435.9" r="1.8"/></g>
<polygon points="54.7,562.5 446.5,402.2 490.2,419.4 100.2,596.5" fill="#a01212"/>
<path d="M59.1,560.7 L104.7,594.5 M68.9,556.7 L114.5,590.1 M78.5,552.7 L124.1,585.7 M88.1,548.8 L133.7,581.4 M97.5,545.0 L143.1,577.1 M106.8,541.2 L152.4,572.9 M116.0,537.4 L161.6,568.7 M125.1,533.7 L170.7,564.6 M134.1,530.0 L179.7,560.5 M143.0,526.4 L188.6,556.5 M151.8,522.8 L197.4,552.5 M160.5,519.2 L206.1,548.5 M169.1,515.7 L214.7,544.6 M177.6,512.2 L223.2,540.8 M186.1,508.8 L231.6,537.0 M194.4,505.4 L239.9,533.2 M202.6,502.0 L248.1,529.5 M210.8,498.7 L256.2,525.8 M218.8,495.4 L264.3,522.1 M226.8,492.1 L272.2,518.5 M234.7,488.9 L280.1,515.0 M242.5,485.7 L287.8,511.4 M250.2,482.6 L295.5,508.0 M257.8,479.4 L303.1,504.5 M265.4,476.3 L310.7,501.1 M272.9,473.3 L318.1,497.7 M280.3,470.2 L325.5,494.4 M287.6,467.3 L332.8,491.0 M294.9,464.3 L340.0,487.8 M302.1,461.3 L347.1,484.5 M309.2,458.4 L354.2,481.3 M316.2,455.6 L361.2,478.1 M323.2,452.7 L368.1,475.0 M330.1,449.9 L374.9,471.9 M336.9,447.1 L381.7,468.8 M343.7,444.3 L388.4,465.7 M350.4,441.6 L395.1,462.7 M357.0,438.9 L401.6,459.7 M363.5,436.2 L408.1,456.8 M370.0,433.5 L414.6,453.8 M376.5,430.9 L421.0,450.9 M382.9,428.3 L427.3,448.1 M389.2,425.7 L433.5,445.2 M395.4,423.2 L439.7,442.4 M401.6,420.6 L445.8,439.6 M407.7,418.1 L451.9,436.9 M413.8,415.6 L457.9,434.1 M419.8,413.2 L463.9,431.4 M425.8,410.7 L469.7,428.7 M431.7,408.3 L475.6,426.1 M437.6,405.9 L481.4,423.4 M443.4,403.5 L487.1,420.8" stroke="#b81a1a" stroke-width="2.8" fill="none" opacity="0.8"/>
<path d="M54.7,562.5 L100.2,596.5 M64.5,558.5 L110.1,592.1 M74.2,554.5 L119.8,587.7 M83.8,550.6 L129.4,583.3 M93.3,546.7 L138.9,579.0 M102.6,542.9 L148.2,574.8 M111.9,539.1 L157.5,570.6 M121.0,535.4 L166.6,566.4 M130.1,531.7 L175.7,562.3 M139.0,528.0 L184.6,558.3 M147.9,524.4 L193.4,554.3 M156.6,520.8 L202.2,550.3 M165.3,517.3 L210.8,546.4 M173.8,513.8 L219.4,542.5 M182.3,510.3 L227.8,538.7 M190.6,506.9 L236.2,534.9 M198.9,503.5 L244.4,531.2 M207.1,500.2 L252.6,527.5 M215.2,496.9 L260.7,523.8 M223.2,493.6 L268.6,520.2 M231.1,490.4 L276.5,516.6 M239.0,487.1 L284.4,513.0 M246.7,484.0 L292.1,509.5 M254.4,480.8 L299.7,506.0 M262.0,477.7 L307.3,502.6 M269.5,474.7 L314.8,499.2 M277.0,471.6 L322.2,495.9 M284.3,468.6 L329.5,492.5 M291.6,465.6 L336.7,489.2 M298.8,462.7 L343.9,486.0 M306.0,459.7 L351.0,482.7 M313.1,456.9 L358.0,479.6 M320.1,454.0 L365.0,476.4 M327.0,451.2 L371.9,473.3 M333.8,448.4 L378.7,470.2 M340.6,445.6 L385.4,467.1 M347.4,442.8 L392.1,464.1 M354.0,440.1 L398.7,461.1 M360.6,437.4 L405.2,458.1 M367.1,434.7 L411.7,455.2 M373.6,432.1 L418.1,452.2 M380.0,429.5 L424.4,449.4 M386.3,426.9 L430.7,446.5 M392.6,424.3 L436.9,443.7 M398.8,421.8 L443.1,440.9 M405.0,419.2 L449.2,438.1 M411.1,416.7 L455.2,435.3 M417.1,414.3 L461.2,432.6 M423.1,411.8 L467.1,429.9 M429.1,409.4 L473.0,427.3 M434.9,407.0 L478.8,424.6 M440.8,404.6 L484.5,422.0 M446.5,402.2 L490.2,419.4" stroke="#7a0c0c" stroke-width="1.1" fill="none" opacity="0.65"/><defs><clipPath id="shoeclip"><path d="M436,210.3 C442.1,208.7 454.3,211.1 470,212.5 C485.7,213.9 514.7,216.4 530,219 C545.3,221.6 556.2,225.0 562,228 C567.8,231.0 562.0,232.2 565,237 C568.0,241.8 573.3,249.5 580,257 C586.7,264.5 597.7,274.7 605,282 C612.3,289.3 617.0,295.2 624,301 C631.0,306.8 639.2,311.2 647,317 C654.8,322.8 663.0,329.7 671,336 C679.0,342.3 687.8,349.3 695,355 C702.2,360.7 707.7,365.6 714,370 C720.3,374.4 726.3,377.9 733,381.5 C739.7,385.1 747.7,388.7 754,391.5 C760.3,394.3 766.8,396.2 771,398.5 C775.2,400.8 777.2,402.6 779,405.5 C780.8,408.4 781.8,411.8 782,416 C782.2,420.2 781.5,426.8 780,431 C778.5,435.2 776.2,438.5 773,441 C769.8,443.5 766.2,444.8 761,446 C755.8,447.2 749.0,447.8 742,448.5 C735.0,449.2 726.8,450.2 719,450.5 C711.2,450.8 703.0,450.4 695,450 C687.0,449.6 678.0,448.7 671,448 C664.0,447.3 659.2,446.8 653,446 C646.8,445.2 640.5,444.2 634,443 C627.5,441.8 620.7,440.2 614,438.5 C607.3,436.8 601.0,434.8 594,432.5 C587.0,430.2 578.5,427.1 572,424.5 C565.5,421.9 560.8,419.8 555,417 C549.2,414.2 542.0,410.4 537,407.5 C532.0,404.6 528.7,402.1 525,399.5 C521.3,396.9 518.3,394.8 515,392 C511.7,389.2 508.3,385.7 505,383 C501.7,380.3 498.7,378.2 495,376 C491.3,373.8 487.5,372.1 483,370 C478.5,367.9 473.5,365.9 468,363.5 C462.5,361.1 456.8,358.6 450,355.5 C443.2,352.4 433.0,348.5 427.5,345 C422.0,341.5 419.3,338.7 417,334.5 C414.7,330.3 413.8,325.2 413.5,320 C413.2,314.8 414.1,308.8 415,303 C415.9,297.2 417.2,291.2 419,285 C420.8,278.8 424.0,272.7 426,266 C428.0,259.3 429.8,252.3 431,245 C432.2,237.7 432.7,227.8 433.5,222 C434.3,216.2 429.9,211.9 436,210.3 Z"/></clipPath><filter id="b8" x="-1" y="-1" width="3" height="3"><feGaussianBlur stdDeviation="8"/></filter><filter id="b5" x="-1" y="-1" width="3" height="3"><feGaussianBlur stdDeviation="5"/></filter><filter id="b3" x="-1" y="-1" width="3" height="3"><feGaussianBlur stdDeviation="3"/></filter><filter id="b2" x="-1" y="-1" width="3" height="3"><feGaussianBlur stdDeviation="1.5"/></filter></defs>
<path d="M436,210.3 C442.1,208.7 454.3,211.1 470,212.5 C485.7,213.9 514.7,216.4 530,219 C545.3,221.6 556.2,225.0 562,228 C567.8,231.0 562.0,232.2 565,237 C568.0,241.8 573.3,249.5 580,257 C586.7,264.5 597.7,274.7 605,282 C612.3,289.3 617.0,295.2 624,301 C631.0,306.8 639.2,311.2 647,317 C654.8,322.8 663.0,329.7 671,336 C679.0,342.3 687.8,349.3 695,355 C702.2,360.7 707.7,365.6 714,370 C720.3,374.4 726.3,377.9 733,381.5 C739.7,385.1 747.7,388.7 754,391.5 C760.3,394.3 766.8,396.2 771,398.5 C775.2,400.8 777.2,402.6 779,405.5 C780.8,408.4 781.8,411.8 782,416 C782.2,420.2 781.5,426.8 780,431 C778.5,435.2 776.2,438.5 773,441 C769.8,443.5 766.2,444.8 761,446 C755.8,447.2 749.0,447.8 742,448.5 C735.0,449.2 726.8,450.2 719,450.5 C711.2,450.8 703.0,450.4 695,450 C687.0,449.6 678.0,448.7 671,448 C664.0,447.3 659.2,446.8 653,446 C646.8,445.2 640.5,444.2 634,443 C627.5,441.8 620.7,440.2 614,438.5 C607.3,436.8 601.0,434.8 594,432.5 C587.0,430.2 578.5,427.1 572,424.5 C565.5,421.9 560.8,419.8 555,417 C549.2,414.2 542.0,410.4 537,407.5 C532.0,404.6 528.7,402.1 525,399.5 C521.3,396.9 518.3,394.8 515,392 C511.7,389.2 508.3,385.7 505,383 C501.7,380.3 498.7,378.2 495,376 C491.3,373.8 487.5,372.1 483,370 C478.5,367.9 473.5,365.9 468,363.5 C462.5,361.1 456.8,358.6 450,355.5 C443.2,352.4 433.0,348.5 427.5,345 C422.0,341.5 419.3,338.7 417,334.5 C414.7,330.3 413.8,325.2 413.5,320 C413.2,314.8 414.1,308.8 415,303 C415.9,297.2 417.2,291.2 419,285 C420.8,278.8 424.0,272.7 426,266 C428.0,259.3 429.8,252.3 431,245 C432.2,237.7 432.7,227.8 433.5,222 C434.3,216.2 429.9,211.9 436,210.3 Z" fill="#2626d4"/>
<g clip-path="url(#shoeclip)">
<ellipse cx="428" cy="288" rx="16" ry="48" fill="#3434e0" filter="url(#b5)" opacity="0.9"/>
<path d="M462,238 C510,245 565,270 615,305 C655,335 705,375 745,398 L735,412 C690,392 640,362 595,328 C550,300 505,275 468,258 Z" fill="#4242ec" filter="url(#b8)" opacity="0.9"/>
<path d="M452,238 C480,245 505,270 540,298 C570,318 598,331 616,342 C597,352 565,355 538,350 C508,343 478,331 458,317 C446,300 445,265 448,240 Z" fill="#1212a4" filter="url(#b8)" opacity="0.75"/>
<path d="M455,250 C480,262 505,285 538,306 C563,321 590,333 606,341 C585,347 558,347 535,342 C508,335 482,323 465,310 C455,295 452,270 455,250 Z" fill="#1010a0" filter="url(#b3)" opacity="0.55"/>
<path d="M438,238 C441,270 443,300 446,330 L452,330 C450,300 448,270 447,238 Z" fill="#3a3ae6" filter="url(#b2)" opacity="0.7"/>
<path d="M553,246 C587,293 637,336 697,374 C732,394 762,406 795,412 L795,330 L600,210 Z" fill="#1212a4" filter="url(#b5)" opacity="0.65"/>
<ellipse cx="650" cy="380" rx="75" ry="20" transform="rotate(25 650 380)" fill="#3838e2" filter="url(#b8)" opacity="0.8"/>
<path d="M405,316 C420,330 440,340 455,346 C475,354 492,362 508,373 C525,386 550,402 572,410 C600,418 640,424 700,425 C740,423 765,416 790,408 L790,470 L400,470 Z" fill="#1414aa" opacity="0.95" filter="url(#b2)"/>
<path d="M405,316 C420,330 440,340 455,346 C475,354 492,362 508,373 C525,386 550,402 572,410 C600,418 640,424 700,425 C740,423 765,416 790,408" stroke="#4444ec" stroke-width="2.2" fill="none" opacity="0.9" filter="url(#b2)"/>
<path d="M600,436 C660,446 730,450 786,434 L786,470 L600,470 Z" fill="#1414a8" filter="url(#b2)" opacity="0.5"/>
<ellipse cx="765" cy="425" rx="14" ry="10" fill="#3a3ae4" filter="url(#b3)" opacity="0.5"/>
<path d="M416.4,337.2 Q425.2,222.2 434.3,190 M425.7,348.6 Q434.5,233.6 443.6,190 M438.8,355.1 Q442.8,240.1 452.9,190 M452.4,361.1 Q450.1,246.1 462.1,190 M466.0,367.1 Q457.4,252.1 471.4,190 M479.4,373.3 Q464.6,258.3 480.7,190 M492.7,379.9 Q471.6,264.9 490.0,190 M505.1,388.1 Q477.7,273.1 499.3,190 M516.2,397.8 Q482.5,282.8 508.6,190 M528.4,406.3 Q488.4,291.3 517.9,190 M540.9,414.2 Q494.7,299.2 527.1,190 M553.9,421.4 Q501.4,306.4 536.4,190 M567.6,427.2 Q508.7,312.2 545.7,190 M581.4,432.4 Q516.3,317.4 555.0,190 M595.4,437.4 Q524.0,322.4 564.3,190 M609.6,441.7 Q531.9,326.7 573.6,190 M624.0,445.5 Q540.0,330.5 582.9,190 M638.4,448.7 Q550.4,333.7 592.1,190 M653.1,451.0 Q565.1,336.0 601.4,190 M667.8,452.6 Q579.8,337.6 610.7,190 M682.6,454.0 Q594.6,339.0 620.0,190 M697.4,455.0 Q609.4,340.0 629.3,190 M712.2,455.0 Q624.2,340.0 638.6,190 M727.0,454.3 Q639.0,339.3 647.9,190 M741.8,453.0 Q653.8,338.0 657.1,190 M756.6,451.5 Q668.6,336.5 666.4,190 M770.6,447.0 Q682.6,332.0 675.7,190 M405.0,368.0 L411.0,368.0 L417.0,376.8 L423.0,380.5 L429.0,383.4 L435.0,384.8 L441.0,386.2 L447.0,387.7 L453.0,389.1 L459.0,390.6 L465.0,392.1 L471.0,393.6 L477.0,395.1 L483.0,396.6 L489.0,398.3 L495.0,400.0 L501.0,402.3 L507.0,404.8 L513.0,407.8 L519.0,410.3 L525.0,412.6 L531.0,414.8 L537.0,417.0 L543.0,418.9 L549.0,420.7 L555.0,422.6 L561.0,423.9 L567.0,425.4 L573.0,426.7 L579.0,428.0 L585.0,429.2 L591.0,430.5 L597.0,431.6 L603.0,432.6 L609.0,433.7 L615.0,434.6 L621.0,435.5 L627.0,436.4 L633.0,437.2 L639.0,437.8 L645.0,438.4 L651.0,438.9 L657.0,439.3 L663.0,439.7 L669.0,440.1 L675.0,440.5 L681.0,440.8 L687.0,441.1 L693.0,441.4 L699.0,441.5 L705.0,441.5 L711.0,441.6 L717.0,441.6 L723.0,441.4 L729.0,441.1 L735.0,440.9 L741.0,440.6 L747.0,440.3 L753.0,440.0 L759.0,439.6 L765.0,438.6 L771.0,437.2 L777.0,433.7 L783.0,431.4 L789.0,431.4 M405.0,360.7 L411.0,360.7 L417.0,369.5 L423.0,373.1 L429.0,376.0 L435.0,377.5 L441.0,378.9 L447.0,380.3 L453.0,381.8 L459.0,383.2 L465.0,384.7 L471.0,386.2 L477.0,387.8 L483.0,389.3 L489.0,391.0 L495.0,392.6 L501.0,394.9 L507.0,397.5 L513.0,400.5 L519.0,403.0 L525.0,405.3 L531.0,407.5 L537.0,409.7 L543.0,411.6 L549.0,413.5 L555.0,415.3 L561.0,416.7 L567.0,418.2 L573.0,419.6 L579.0,420.9 L585.0,422.2 L591.0,423.5 L597.0,424.6 L603.0,425.7 L609.0,426.7 L615.0,427.8 L621.0,428.7 L627.0,429.6 L633.0,430.4 L639.0,431.0 L645.0,431.6 L651.0,432.2 L657.0,432.7 L663.0,433.1 L669.0,433.5 L675.0,433.9 L681.0,434.2 L687.0,434.5 L693.0,434.9 L699.0,435.0 L705.0,435.1 L711.0,435.1 L717.0,435.2 L723.0,435.0 L729.0,434.8 L735.0,434.5 L741.0,434.3 L747.0,434.0 L753.0,433.7 L759.0,433.3 L765.0,432.3 L771.0,431.0 L777.0,427.4 L783.0,425.2 L789.0,425.2 M405.0,353.3 L411.0,353.3 L417.0,362.1 L423.0,365.8 L429.0,368.7 L435.0,370.1 L441.0,371.5 L447.0,373.0 L453.0,374.4 L459.0,375.9 L465.0,377.4 L471.0,378.9 L477.0,380.4 L483.0,382.0 L489.0,383.6 L495.0,385.3 L501.0,387.6 L507.0,390.2 L513.0,393.1 L519.0,395.7 L525.0,398.0 L531.0,400.2 L537.0,402.5 L543.0,404.3 L549.0,406.2 L555.0,408.0 L561.0,409.4 L567.0,411.0 L573.0,412.5 L579.0,413.8 L585.0,415.1 L591.0,416.4 L597.0,417.6 L603.0,418.7 L609.0,419.8 L615.0,420.9 L621.0,421.8 L627.0,422.7 L633.0,423.6 L639.0,424.3 L645.0,424.9 L651.0,425.5 L657.0,426.0 L663.0,426.4 L669.0,426.9 L675.0,427.3 L681.0,427.6 L687.0,428.0 L693.0,428.3 L699.0,428.5 L705.0,428.6 L711.0,428.7 L717.0,428.8 L723.0,428.6 L729.0,428.4 L735.0,428.2 L741.0,427.9 L747.0,427.7 L753.0,427.4 L759.0,427.1 L765.0,426.1 L771.0,424.7 L777.0,421.2 L783.0,419.1 L789.0,419.1 M405.0,346.0 L411.0,346.0 L417.0,354.8 L423.0,358.4 L429.0,361.3 L435.0,362.8 L441.0,364.2 L447.0,365.6 L453.0,367.1 L459.0,368.5 L465.0,370.0 L471.0,371.5 L477.0,373.1 L483.0,374.6 L489.0,376.3 L495.0,378.0 L501.0,380.3 L507.0,382.8 L513.0,385.8 L519.0,388.4 L525.0,390.7 L531.0,392.9 L537.0,395.2 L543.0,397.0 L549.0,398.9 L555.0,400.8 L561.0,402.2 L567.0,403.8 L573.0,405.3 L579.0,406.7 L585.0,408.1 L591.0,409.4 L597.0,410.7 L603.0,411.8 L609.0,412.9 L615.0,414.0 L621.0,415.0 L627.0,415.9 L633.0,416.9 L639.0,417.5 L645.0,418.1 L651.0,418.8 L657.0,419.3 L663.0,419.8 L669.0,420.3 L675.0,420.7 L681.0,421.1 L687.0,421.4 L693.0,421.8 L699.0,422.0 L705.0,422.1 L711.0,422.3 L717.0,422.4 L723.0,422.2 L729.0,422.0 L735.0,421.8 L741.0,421.6 L747.0,421.3 L753.0,421.1 L759.0,420.8 L765.0,419.8 L771.0,418.5 L777.0,415.0 L783.0,412.9 L789.0,412.9 M405.0,338.6 L411.0,338.6 L417.0,347.4 L423.0,351.1 L429.0,354.0 L435.0,355.4 L441.0,356.8 L447.0,358.3 L453.0,359.7 L459.0,361.2 L465.0,362.7 L471.0,364.2 L477.0,365.7 L483.0,367.3 L489.0,369.0 L495.0,370.6 L501.0,373.0 L507.0,375.5 L513.0,378.5 L519.0,381.1 L525.0,383.4 L531.0,385.6 L537.0,387.9 L543.0,389.7 L549.0,391.6 L555.0,393.5 L561.0,394.9 L567.0,396.6 L573.0,398.2 L579.0,399.6 L585.0,401.0 L591.0,402.4 L597.0,403.7 L603.0,404.8 L609.0,406.0 L615.0,407.1 L621.0,408.1 L627.0,409.1 L633.0,410.1 L639.0,410.8 L645.0,411.4 L651.0,412.1 L657.0,412.6 L663.0,413.1 L669.0,413.6 L675.0,414.1 L681.0,414.5 L687.0,414.9 L693.0,415.3 L699.0,415.6 L705.0,415.7 L711.0,415.8 L717.0,415.9 L723.0,415.9 L729.0,415.7 L735.0,415.5 L741.0,415.3 L747.0,415.0 L753.0,414.8 L759.0,414.5 L765.0,413.5 L771.0,412.2 L777.0,408.8 L783.0,406.8 L789.0,406.8 M405.0,331.3 L411.0,331.3 L417.0,340.1 L423.0,343.7 L429.0,346.6 L435.0,348.1 L441.0,349.5 L447.0,350.9 L453.0,352.4 L459.0,353.9 L465.0,355.3 L471.0,356.8 L477.0,358.4 L483.0,360.0 L489.0,361.6 L495.0,363.3 L501.0,365.6 L507.0,368.2 L513.0,371.2 L519.0,373.7 L525.0,376.1 L531.0,378.3 L537.0,380.6 L543.0,382.5 L549.0,384.4 L555.0,386.2 L561.0,387.7 L567.0,389.4 L573.0,391.1 L579.0,392.5 L585.0,394.0 L591.0,395.4 L597.0,396.7 L603.0,397.9 L609.0,399.1 L615.0,400.3 L621.0,401.3 L627.0,402.3 L633.0,403.3 L639.0,404.0 L645.0,404.7 L651.0,405.3 L657.0,405.9 L663.0,406.5 L669.0,407.0 L675.0,407.5 L681.0,407.9 L687.0,408.4 L693.0,408.8 L699.0,409.1 L705.0,409.2 L711.0,409.4 L717.0,409.5 L723.0,409.5 L729.0,409.3 L735.0,409.1 L741.0,409.0 L747.0,408.7 L753.0,408.5 L759.0,408.2 L765.0,407.3 L771.0,406.0 L777.0,402.6 L783.0,400.6 L789.0,400.6 M405.0,323.9 L411.0,323.9 L417.0,332.7 L423.0,336.4 L429.0,339.3 L435.0,340.7 L441.0,342.2 L447.0,343.6 L453.0,345.0 L459.0,346.5 L465.0,348.0 L471.0,349.5 L477.0,351.1 L483.0,352.6 L489.0,354.3 L495.0,356.0 L501.0,358.3 L507.0,360.9 L513.0,363.9 L519.0,366.4 L525.0,368.8 L531.0,371.0 L537.0,373.3 L543.0,375.2 L549.0,377.1 L555.0,379.0 L561.0,380.4 L567.0,382.3 L573.0,383.9 L579.0,385.5 L585.0,386.9 L591.0,388.4 L597.0,389.7 L603.0,390.9 L609.0,392.2 L615.0,393.4 L621.0,394.5 L627.0,395.5 L633.0,396.5 L639.0,397.2 L645.0,397.9 L651.0,398.6 L657.0,399.3 L663.0,399.8 L669.0,400.4 L675.0,400.9 L681.0,401.3 L687.0,401.8 L693.0,402.3 L699.0,402.6 L705.0,402.8 L711.0,403.0 L717.0,403.1 L723.0,403.1 L729.0,402.9 L735.0,402.8 L741.0,402.6 L747.0,402.4 L753.0,402.2 L759.0,401.9 L765.0,401.0 L771.0,399.7 L777.0,396.3 L783.0,394.5 L789.0,394.5 M405.0,316.6 L411.0,316.6 L417.0,325.4 L423.0,329.0 L429.0,331.9 L435.0,333.4 L441.0,334.8 L447.0,336.2 L453.0,337.7 L459.0,339.2 L465.0,340.6 L471.0,342.1 L477.0,343.7 L483.0,345.3 L489.0,347.0 L495.0,348.6 L501.0,351.0 L507.0,353.6 L513.0,356.6 L519.0,359.1 L525.0,361.5 L531.0,363.7 L537.0,366.0 L543.0,367.9 L549.0,369.8 L555.0,371.7 L561.0,373.2 L567.0,375.1 L573.0,376.8 L579.0,378.4 L585.0,379.9 L591.0,381.3 L597.0,382.7 L603.0,384.0 L609.0,385.3 L615.0,386.5 L621.0,387.6 L627.0,388.7 L633.0,389.7 L639.0,390.5 L645.0,391.2 L651.0,391.9 L657.0,392.6 L663.0,393.2 L669.0,393.7 L675.0,394.3 L681.0,394.8 L687.0,395.3 L693.0,395.8 L699.0,396.1 L705.0,396.3 L711.0,396.5 L717.0,396.7 L723.0,396.7 L729.0,396.6 L735.0,396.4 L741.0,396.3 L747.0,396.1 L753.0,395.9 L759.0,395.6 L765.0,394.7 L771.0,393.5 L777.0,390.1 L783.0,388.3 L789.0,388.3 M405.0,309.2 L411.0,309.2 L417.0,318.0 L423.0,321.7 L429.0,324.6 L435.0,326.0 L441.0,327.5 L447.0,328.9 L453.0,330.3 L459.0,331.8 L465.0,333.3 L471.0,334.8 L477.0,336.4 L483.0,337.9 L489.0,339.6 L495.0,341.3 L501.0,343.7 L507.0,346.2 L513.0,349.2 L519.0,351.8 L525.0,354.2 L531.0,356.4 L537.0,358.7 L543.0,360.6 L549.0,362.5 L555.0,364.5 L561.0,365.9 L567.0,367.9 L573.0,369.7 L579.0,371.3 L585.0,372.8 L591.0,374.3 L597.0,375.7 L603.0,377.0 L609.0,378.4 L615.0,379.6 L621.0,380.8 L627.0,381.9 L633.0,382.9 L639.0,383.7 L645.0,384.5 L651.0,385.2 L657.0,385.9 L663.0,386.5 L669.0,387.1 L675.0,387.7 L681.0,388.2 L687.0,388.7 L693.0,389.3 L699.0,389.6 L705.0,389.9 L711.0,390.1 L717.0,390.3 L723.0,390.3 L729.0,390.2 L735.0,390.1 L741.0,390.0 L747.0,389.8 L753.0,389.6 L759.0,389.4 L765.0,388.5 L771.0,387.2 L777.0,383.9 L783.0,382.2 L789.0,382.2 M405.0,301.9 L411.0,301.9 L417.0,310.7 L423.0,314.3 L429.0,317.2 L435.0,318.7 L441.0,320.1 L447.0,321.5 L453.0,323.0 L459.0,324.5 L465.0,325.9 L471.0,327.4 L477.0,329.0 L483.0,330.6 L489.0,332.3 L495.0,334.0 L501.0,336.3 L507.0,338.9 L513.0,341.9 L519.0,344.5 L525.0,346.8 L531.0,349.1 L537.0,351.4 L543.0,353.3 L549.0,355.3 L555.0,357.2 L561.0,358.6 L567.0,360.7 L573.0,362.5 L579.0,364.2 L585.0,365.8 L591.0,367.3 L597.0,368.8 L603.0,370.1 L609.0,371.4 L615.0,372.8 L621.0,373.9 L627.0,375.1 L633.0,376.1 L639.0,376.9 L645.0,377.7 L651.0,378.5 L657.0,379.2 L663.0,379.8 L669.0,380.5 L675.0,381.1 L681.0,381.6 L687.0,382.2 L693.0,382.7 L699.0,383.1 L705.0,383.4 L711.0,383.7 L717.0,383.9 L723.0,383.9 L729.0,383.8 L735.0,383.7 L741.0,383.6 L747.0,383.5 L753.0,383.3 L759.0,383.1 L765.0,382.2 L771.0,381.0 L777.0,377.7 L783.0,376.0 L789.0,376.0 M405.0,294.5 L411.0,294.5 L417.0,303.3 L423.0,307.0 L429.0,309.9 L435.0,311.3 L441.0,312.8 L447.0,314.2 L453.0,315.7 L459.0,317.1 L465.0,318.6 L471.0,320.1 L477.0,321.7 L483.0,323.3 L489.0,325.0 L495.0,326.7 L501.0,329.0 L507.0,331.6 L513.0,334.6 L519.0,337.2 L525.0,339.5 L531.0,341.8 L537.0,344.1 L543.0,346.0 L549.0,348.0 L555.0,349.9 L561.0,351.4 L567.0,353.5 L573.0,355.4 L579.0,357.1 L585.0,358.7 L591.0,360.3 L597.0,361.8 L603.0,363.2 L609.0,364.5 L615.0,365.9 L621.0,367.1 L627.0,368.3 L633.0,369.3 L639.0,370.2 L645.0,371.0 L651.0,371.8 L657.0,372.5 L663.0,373.2 L669.0,373.9 L675.0,374.5 L681.0,375.1 L687.0,375.6 L693.0,376.2 L699.0,376.6 L705.0,376.9 L711.0,377.2 L717.0,377.5 L723.0,377.5 L729.0,377.5 L735.0,377.4 L741.0,377.3 L747.0,377.1 L753.0,377.0 L759.0,376.8 L765.0,375.9 L771.0,374.7 L777.0,371.5 L783.0,369.9 L789.0,369.9 M405.0,287.2 L411.0,287.2 L417.0,296.0 L423.0,299.6 L429.0,302.5 L435.0,304.0 L441.0,305.4 L447.0,306.9 L453.0,308.3 L459.0,309.8 L465.0,311.2 L471.0,312.8 L477.0,314.3 L483.0,315.9 L489.0,317.6 L495.0,319.3 L501.0,321.7 L507.0,324.3 L513.0,327.3 L519.0,329.9 L525.0,332.2 L531.0,334.5 L537.0,336.8 L543.0,338.8 L549.0,340.7 L555.0,342.7 L561.0,344.1 L567.0,346.3 L573.0,348.2 L579.0,350.0 L585.0,351.7 L591.0,353.3 L597.0,354.8 L603.0,356.2 L609.0,357.6 L615.0,359.0 L621.0,360.3 L627.0,361.4 L633.0,362.6 L639.0,363.4 L645.0,364.2 L651.0,365.1 L657.0,365.8 L663.0,366.5 L669.0,367.2 L675.0,367.9 L681.0,368.5 L687.0,369.1 L693.0,369.7 L699.0,370.1 L705.0,370.5 L711.0,370.8 L717.0,371.1 L723.0,371.2 L729.0,371.1 L735.0,371.1 L741.0,371.0 L747.0,370.8 L753.0,370.7 L759.0,370.5 L765.0,369.7 L771.0,368.5 L777.0,365.2 L783.0,363.7 L789.0,363.7 M405.0,279.8 L411.0,279.8 L417.0,288.6 L423.0,292.3 L429.0,295.2 L435.0,296.6 L441.0,298.1 L447.0,299.5 L453.0,301.0 L459.0,302.4 L465.0,303.9 L471.0,305.4 L477.0,307.0 L483.0,308.6 L489.0,310.3 L495.0,312.0 L501.0,314.4 L507.0,316.9 L513.0,320.0 L519.0,322.6 L525.0,324.9 L531.0,327.2 L537.0,329.5 L543.0,331.5 L549.0,333.4 L555.0,335.4 L561.0,336.9 L567.0,339.2 L573.0,341.1 L579.0,342.9 L585.0,344.6 L591.0,346.3 L597.0,347.8 L603.0,349.3 L609.0,350.7 L615.0,352.1 L621.0,353.4 L627.0,354.6 L633.0,355.8 L639.0,356.7 L645.0,357.5 L651.0,358.4 L657.0,359.2 L663.0,359.9 L669.0,360.6 L675.0,361.3 L681.0,361.9 L687.0,362.6 L693.0,363.2 L699.0,363.7 L705.0,364.0 L711.0,364.4 L717.0,364.7 L723.0,364.8 L729.0,364.7 L735.0,364.7 L741.0,364.6 L747.0,364.5 L753.0,364.4 L759.0,364.2 L765.0,363.4 L771.0,362.2 L777.0,359.0 L783.0,357.5 L789.0,357.5 M405.0,272.4 L411.0,272.4 L417.0,281.3 L423.0,284.9 L429.0,287.8 L435.0,289.3 L441.0,290.7 L447.0,292.2 L453.0,293.6 L459.0,295.1 L465.0,296.5 L471.0,298.1 L477.0,299.7 L483.0,301.3 L489.0,303.0 L495.0,304.7 L501.0,307.0 L507.0,309.6 L513.0,312.7 L519.0,315.2 L525.0,317.6 L531.0,319.9 L537.0,322.2 L543.0,324.2 L549.0,326.2 L555.0,328.1 L561.0,329.6 L567.0,332.0 L573.0,334.0 L579.0,335.8 L585.0,337.5 L591.0,339.2 L597.0,340.8 L603.0,342.3 L609.0,343.8 L615.0,345.3 L621.0,346.6 L627.0,347.8 L633.0,349.0 L639.0,349.9 L645.0,350.8 L651.0,351.7 L657.0,352.5 L663.0,353.2 L669.0,354.0 L675.0,354.7 L681.0,355.4 L687.0,356.0 L693.0,356.7 L699.0,357.2 L705.0,357.6 L711.0,357.9 L717.0,358.3 L723.0,358.4 L729.0,358.4 L735.0,358.4 L741.0,358.3 L747.0,358.2 L753.0,358.1 L759.0,358.0 L765.0,357.1 L771.0,356.0 L777.0,352.8 L783.0,351.4 L789.0,351.4 M405.0,265.1 L411.0,265.1 L417.0,273.9 L423.0,277.6 L429.0,280.5 L435.0,281.9 L441.0,283.4 L447.0,284.8 L453.0,286.3 L459.0,287.7 L465.0,289.2 L471.0,290.7 L477.0,292.3 L483.0,293.9 L489.0,295.6 L495.0,297.3 L501.0,299.7 L507.0,302.3 L513.0,305.3 L519.0,307.9 L525.0,310.3 L531.0,312.6 L537.0,314.9 L543.0,316.9 L549.0,318.9 L555.0,320.9 L561.0,322.4 L567.0,324.8 L573.0,326.8 L579.0,328.7 L585.0,330.5 L591.0,332.2 L597.0,333.8 L603.0,335.4 L609.0,336.9 L615.0,338.4 L621.0,339.7 L627.0,341.0 L633.0,342.2 L639.0,343.1 L645.0,344.0 L651.0,345.0 L657.0,345.8 L663.0,346.6 L669.0,347.4 L675.0,348.1 L681.0,348.8 L687.0,349.5 L693.0,350.2 L699.0,350.7 L705.0,351.1 L711.0,351.5 L717.0,351.9 L723.0,352.0 L729.0,352.0 L735.0,352.0 L741.0,352.0 L747.0,351.9 L753.0,351.8 L759.0,351.7 L765.0,350.9 L771.0,349.7 L777.0,346.6 L783.0,345.2 L789.0,345.2 M405.0,257.7 L411.0,257.7 L417.0,266.6 L423.0,270.2 L429.0,273.1 L435.0,274.6 L441.0,276.0 L447.0,277.5 L453.0,278.9 L459.0,280.4 L465.0,281.9 L471.0,283.4 L477.0,285.0 L483.0,286.6 L489.0,288.3 L495.0,290.0 L501.0,292.4 L507.0,295.0 L513.0,298.0 L519.0,300.6 L525.0,303.0 L531.0,305.3 L537.0,307.6 L543.0,309.6 L549.0,311.6 L555.0,313.6 L561.0,315.1 L567.0,317.6 L573.0,319.7 L579.0,321.6 L585.0,323.4 L591.0,325.2 L597.0,326.9 L603.0,328.4 L609.0,330.0 L615.0,331.5 L621.0,332.9 L627.0,334.2 L633.0,335.4 L639.0,336.4 L645.0,337.3 L651.0,338.2 L657.0,339.1 L663.0,339.9 L669.0,340.7 L675.0,341.5 L681.0,342.2 L687.0,342.9 L693.0,343.7 L699.0,344.2 L705.0,344.6 L711.0,345.1 L717.0,345.5 L723.0,345.6 L729.0,345.6 L735.0,345.7 L741.0,345.6 L747.0,345.6 L753.0,345.5 L759.0,345.4 L765.0,344.6 L771.0,343.4 L777.0,340.3 L783.0,339.1 L789.0,339.1 M405.0,250.4 L411.0,250.4 L417.0,259.2 L423.0,262.9 L429.0,265.8 L435.0,267.2 L441.0,268.7 L447.0,270.1 L453.0,271.6 L459.0,273.0 L465.0,274.5 L471.0,276.0 L477.0,277.6 L483.0,279.2 L489.0,281.0 L495.0,282.7 L501.0,285.1 L507.0,287.7 L513.0,290.7 L519.0,293.3 L525.0,295.7 L531.0,298.0 L537.0,300.3 L543.0,302.3 L549.0,304.3 L555.0,306.3 L561.0,307.9 L567.0,310.4 L573.0,312.6 L579.0,314.6 L585.0,316.4 L591.0,318.2 L597.0,319.9 L603.0,321.5 L609.0,323.1 L615.0,324.6 L621.0,326.0 L627.0,327.4 L633.0,328.6 L639.0,329.6 L645.0,330.6 L651.0,331.5 L657.0,332.4 L663.0,333.3 L669.0,334.1 L675.0,334.9 L681.0,335.6 L687.0,336.4 L693.0,337.1 L699.0,337.7 L705.0,338.2 L711.0,338.6 L717.0,339.1 L723.0,339.2 L729.0,339.3 L735.0,339.3 L741.0,339.3 L747.0,339.3 L753.0,339.2 L759.0,339.1 L765.0,338.3 L771.0,337.2 L777.0,334.1 L783.0,332.9 L789.0,332.9 M405.0,243.0 L411.0,243.0 L417.0,251.9 L423.0,255.5 L429.0,258.4 L435.0,259.9 L441.0,261.3 L447.0,262.8 L453.0,264.2 L459.0,265.7 L465.0,267.2 L471.0,268.7 L477.0,270.3 L483.0,271.9 L489.0,273.6 L495.0,275.3 L501.0,277.7 L507.0,280.3 L513.0,283.4 L519.0,286.0 L525.0,288.4 L531.0,290.7 L537.0,293.0 L543.0,295.1 L549.0,297.1 L555.0,299.1 L561.0,300.6 L567.0,303.2 L573.0,305.4 L579.0,307.5 L585.0,309.3 L591.0,311.2 L597.0,312.9 L603.0,314.5 L609.0,316.2 L615.0,317.7 L621.0,319.2 L627.0,320.6 L633.0,321.8 L639.0,322.9 L645.0,323.8 L651.0,324.8 L657.0,325.7 L663.0,326.6 L669.0,327.5 L675.0,328.3 L681.0,329.1 L687.0,329.8 L693.0,330.6 L699.0,331.2 L705.0,331.7 L711.0,332.2 L717.0,332.7 L723.0,332.8 L729.0,332.9 L735.0,333.0 L741.0,333.0 L747.0,333.0 L753.0,332.9 L759.0,332.8 L765.0,332.1 L771.0,330.9 L777.0,327.9 L783.0,326.8 L789.0,326.8 M405.0,235.7 L411.0,235.7 L417.0,244.5 L423.0,248.2 L429.0,251.1 L435.0,252.6 L441.0,254.0 L447.0,255.4 L453.0,256.9 L459.0,258.3 L465.0,259.8 L471.0,261.3 L477.0,262.9 L483.0,264.6 L489.0,266.3 L495.0,268.0 L501.0,270.4 L507.0,273.0 L513.0,276.1 L519.0,278.7 L525.0,281.1 L531.0,283.4 L537.0,285.7 L543.0,287.8 L549.0,289.8 L555.0,291.8 L561.0,293.4 L567.0,296.1 L573.0,298.3 L579.0,300.4 L585.0,302.3 L591.0,304.2 L597.0,305.9 L603.0,307.6 L609.0,309.2 L615.0,310.9 L621.0,312.4 L627.0,313.8 L633.0,315.1 L639.0,316.1 L645.0,317.1 L651.0,318.1 L657.0,319.1 L663.0,320.0 L669.0,320.9 L675.0,321.7 L681.0,322.5 L687.0,323.3 L693.0,324.1 L699.0,324.7 L705.0,325.3 L711.0,325.8 L717.0,326.2 L723.0,326.4 L729.0,326.5 L735.0,326.6 L741.0,326.7 L747.0,326.6 L753.0,326.6 L759.0,326.5 L765.0,325.8 L771.0,324.7 L777.0,321.7 L783.0,320.6 L789.0,320.6 M405.0,228.3 L411.0,228.3 L417.0,237.2 L423.0,240.8 L429.0,243.8 L435.0,245.2 L441.0,246.6 L447.0,248.1 L453.0,249.5 L459.0,251.0 L465.0,252.5 L471.0,254.0 L477.0,255.6 L483.0,257.2 L489.0,259.0 L495.0,260.7 L501.0,263.1 L507.0,265.7 L513.0,268.7 L519.0,271.4 L525.0,273.8 L531.0,276.1 L537.0,278.5 L543.0,280.5 L549.0,282.5 L555.0,284.5 L561.0,286.1 L567.0,288.9 L573.0,291.1 L579.0,293.3 L585.0,295.2 L591.0,297.1 L597.0,298.9 L603.0,300.6 L609.0,302.3 L615.0,304.0 L621.0,305.5 L627.0,306.9 L633.0,308.3 L639.0,309.3 L645.0,310.3 L651.0,311.4 L657.0,312.4 L663.0,313.3 L669.0,314.2 L675.0,315.1 L681.0,315.9 L687.0,316.8 L693.0,317.6 L699.0,318.2 L705.0,318.8 L711.0,319.4 L717.0,319.8 L723.0,320.1 L729.0,320.2 L735.0,320.3 L741.0,320.3 L747.0,320.3 L753.0,320.3 L759.0,320.3 L765.0,319.5 L771.0,318.4 L777.0,315.5 L783.0,314.5 L789.0,314.5 M405.0,221.0 L411.0,221.0 L417.0,229.8 L423.0,233.5 L429.0,236.4 L435.0,237.9 L441.0,239.3 L447.0,240.7 L453.0,242.2 L459.0,243.6 L465.0,245.1 L471.0,246.6 L477.0,248.3 L483.0,249.9 L489.0,251.6 L495.0,253.4 L501.0,255.8 L507.0,258.4 L513.0,261.4 L519.0,264.0 L525.0,266.4 L531.0,268.7 L537.0,271.2 L543.0,273.2 L549.0,275.2 L555.0,277.3 L561.0,278.8 L567.0,281.7 L573.0,284.0 L579.0,286.2 L585.0,288.2 L591.0,290.1 L597.0,292.0 L603.0,293.7 L609.0,295.4 L615.0,297.1 L621.0,298.7 L627.0,300.1 L633.0,301.5 L639.0,302.6 L645.0,303.6 L651.0,304.7 L657.0,305.7 L663.0,306.6 L669.0,307.6 L675.0,308.5 L681.0,309.4 L687.0,310.2 L693.0,311.1 L699.0,311.8 L705.0,312.3 L711.0,312.9 L717.0,313.4 L723.0,313.7 L729.0,313.8 L735.0,313.9 L741.0,314.0 L747.0,314.0 L753.0,314.0 L759.0,314.0 L765.0,313.3 L771.0,312.2 L777.0,309.2 L783.0,308.3 L789.0,308.3 M405.0,213.6 L411.0,213.6 L417.0,222.5 L423.0,226.1 L429.0,229.1 L435.0,230.5 L441.0,231.9 L447.0,233.4 L453.0,234.8 L459.0,236.3 L465.0,237.8 L471.0,239.3 L477.0,240.9 L483.0,242.5 L489.0,244.3 L495.0,246.0 L501.0,248.4 L507.0,251.1 L513.0,254.1 L519.0,256.7 L525.0,259.1 L531.0,261.4 L537.0,263.9 L543.0,265.9 L549.0,268.0 L555.0,270.0 L561.0,271.6 L567.0,274.5 L573.0,276.9 L579.0,279.1 L585.0,281.1 L591.0,283.1 L597.0,285.0 L603.0,286.7 L609.0,288.5 L615.0,290.2 L621.0,291.8 L627.0,293.3 L633.0,294.7 L639.0,295.8 L645.0,296.9 L651.0,298.0 L657.0,299.0 L663.0,300.0 L669.0,301.0 L675.0,301.9 L681.0,302.8 L687.0,303.7 L693.0,304.6 L699.0,305.3 L705.0,305.9 L711.0,306.5 L717.0,307.0 L723.0,307.3 L729.0,307.4 L735.0,307.6 L741.0,307.7 L747.0,307.7 L753.0,307.7 L759.0,307.7 L765.0,307.0 L771.0,305.9 L777.0,303.0 L783.0,302.2 L789.0,302.2 M405.0,206.3 L411.0,206.3 L417.0,215.1 L423.0,218.8 L429.0,221.7 L435.0,223.2 L441.0,224.6 L447.0,226.0 L453.0,227.5 L459.0,229.0 L465.0,230.4 L471.0,231.9 L477.0,233.6 L483.0,235.2 L489.0,237.0 L495.0,238.7 L501.0,241.1 L507.0,243.7 L513.0,246.8 L519.0,249.4 L525.0,251.8 L531.0,254.1 L537.0,256.6 L543.0,258.6 L549.0,260.7 L555.0,262.8 L561.0,264.3 L567.0,267.3 L573.0,269.7 L579.0,272.0 L585.0,274.1 L591.0,276.1 L597.0,278.0 L603.0,279.8 L609.0,281.6 L615.0,283.4 L621.0,285.0 L627.0,286.5 L633.0,287.9 L639.0,289.0 L645.0,290.1 L651.0,291.3 L657.0,292.3 L663.0,293.3 L669.0,294.3 L675.0,295.3 L681.0,296.2 L687.0,297.1 L693.0,298.0 L699.0,298.8 L705.0,299.4 L711.0,300.1 L717.0,300.6 L723.0,300.9 L729.0,301.1 L735.0,301.2 L741.0,301.3 L747.0,301.4 L753.0,301.4 L759.0,301.4 L765.0,300.7 L771.0,299.7 L777.0,296.8 L783.0,296.0 L789.0,296.0 M405.0,198.9 L411.0,198.9 L417.0,207.7 L423.0,211.4 L429.0,214.4 L435.0,215.8 L441.0,217.3 L447.0,218.7 L453.0,220.1 L459.0,221.6 L465.0,223.1 L471.0,224.6 L477.0,226.2 L483.0,227.9 L489.0,229.6 L495.0,231.4 L501.0,233.8 L507.0,236.4 L513.0,239.5 L519.0,242.1 L525.0,244.5 L531.0,246.8 L537.0,249.3 L543.0,251.3 L549.0,253.4 L555.0,255.5 L561.0,257.1 L567.0,260.1 L573.0,262.6 L579.0,264.9 L585.0,267.0 L591.0,269.1 L597.0,271.0 L603.0,272.8 L609.0,274.7 L615.0,276.5 L621.0,278.2 L627.0,279.7 L633.0,281.1 L639.0,282.3 L645.0,283.4 L651.0,284.6 L657.0,285.6 L663.0,286.7 L669.0,287.7 L675.0,288.7 L681.0,289.6 L687.0,290.6 L693.0,291.5 L699.0,292.3 L705.0,293.0 L711.0,293.6 L717.0,294.2 L723.0,294.5 L729.0,294.7 L735.0,294.9 L741.0,295.0 L747.0,295.1 L753.0,295.1 L759.0,295.1 L765.0,294.5 L771.0,293.4 L777.0,290.6 L783.0,289.9 L789.0,289.9 M405.0,191.6 L411.0,191.6 L417.0,200.4 L423.0,204.1 L429.0,207.0 L435.0,208.5 L441.0,209.9 L447.0,211.3 L453.0,212.8 L459.0,214.3 L465.0,215.7 L471.0,217.2 L477.0,218.9 L483.0,220.5 L489.0,222.3 L495.0,224.0 L501.0,226.5 L507.0,229.1 L513.0,232.2 L519.0,234.8 L525.0,237.2 L531.0,239.5 L537.0,242.0 L543.0,244.1 L549.0,246.1 L555.0,248.2 L561.0,249.8 L567.0,252.9 L573.0,255.5 L579.0,257.8 L585.0,260.0 L591.0,262.0 L597.0,264.0 L603.0,265.9 L609.0,267.8 L615.0,269.6 L621.0,271.3 L627.0,272.9 L633.0,274.3 L639.0,275.5 L645.0,276.7 L651.0,277.8 L657.0,279.0 L663.0,280.0 L669.0,281.1 L675.0,282.1 L681.0,283.1 L687.0,284.0 L693.0,285.0 L699.0,285.8 L705.0,286.5 L711.0,287.2 L717.0,287.8 L723.0,288.1 L729.0,288.3 L735.0,288.5 L741.0,288.7 L747.0,288.8 L753.0,288.8 L759.0,288.9 L765.0,288.2 L771.0,287.2 L777.0,284.3 L783.0,283.7 L789.0,283.7 M405.0,184.2 L411.0,184.2 L417.0,193.0 L423.0,196.7 L429.0,199.7 L435.0,201.1 L441.0,202.6 L447.0,204.0 L453.0,205.4 L459.0,206.9 L465.0,208.4 L471.0,209.9 L477.0,211.5 L483.0,213.2 L489.0,215.0 L495.0,216.7 L501.0,219.1 L507.0,221.8 L513.0,224.8 L519.0,227.5 L525.0,229.9 L531.0,232.2 L537.0,234.7 L543.0,236.8 L549.0,238.9 L555.0,241.0 L561.0,242.6 L567.0,245.8 L573.0,248.3 L579.0,250.7 L585.0,252.9 L591.0,255.0 L597.0,257.0 L603.0,258.9 L609.0,260.9 L615.0,262.7 L621.0,264.5 L627.0,266.1 L633.0,267.5 L639.0,268.8 L645.0,269.9 L651.0,271.1 L657.0,272.3 L663.0,273.4 L669.0,274.5 L675.0,275.5 L681.0,276.5 L687.0,277.5 L693.0,278.5 L699.0,279.3 L705.0,280.0 L711.0,280.8 L717.0,281.4 L723.0,281.7 L729.0,282.0 L735.0,282.2 L741.0,282.3 L747.0,282.4 L753.0,282.5 L759.0,282.6 L765.0,281.9 L771.0,280.9 L777.0,278.1 L783.0,277.6 L789.0,277.6 M405.0,176.9 L411.0,176.9 L417.0,185.7 L423.0,189.4 L429.0,192.3 L435.0,193.8 L441.0,195.2 L447.0,196.6 L453.0,198.1 L459.0,199.6 L465.0,201.0 L471.0,202.6 L477.0,204.2 L483.0,205.9 L489.0,207.6 L495.0,209.4 L501.0,211.8 L507.0,214.4 L513.0,217.5 L519.0,220.2 L525.0,222.6 L531.0,224.9 L537.0,227.4 L543.0,229.5 L549.0,231.6 L555.0,233.7 L561.0,235.3 L567.0,238.6 L573.0,241.2 L579.0,243.7 L585.0,245.9 L591.0,248.0 L597.0,250.1 L603.0,252.0 L609.0,253.9 L615.0,255.9 L621.0,257.6 L627.0,259.3 L633.0,260.8 L639.0,262.0 L645.0,263.2 L651.0,264.4 L657.0,265.6 L663.0,266.7 L669.0,267.8 L675.0,268.9 L681.0,269.9 L687.0,271.0 L693.0,272.0 L699.0,272.8 L705.0,273.6 L711.0,274.3 L717.0,275.0 L723.0,275.3 L729.0,275.6 L735.0,275.8 L741.0,276.0 L747.0,276.1 L753.0,276.2 L759.0,276.3 L765.0,275.6 L771.0,274.7 L777.0,271.9 L783.0,271.4 L789.0,271.4 M405.0,169.5 L411.0,169.5 L417.0,178.3 L423.0,182.0 L429.0,185.0 L435.0,186.4 L441.0,187.9 L447.0,189.3 L453.0,190.8 L459.0,192.2 L465.0,193.7 L471.0,195.2 L477.0,196.9 L483.0,198.5 L489.0,200.3 L495.0,202.0 L501.0,204.5 L507.0,207.1 L513.0,210.2 L519.0,212.9 L525.0,215.3 L531.0,217.6 L537.0,220.1 L543.0,222.2 L549.0,224.3 L555.0,226.4 L561.0,228.1 L567.0,231.4 L573.0,234.0 L579.0,236.6 L585.0,238.8 L591.0,241.0 L597.0,243.1 L603.0,245.1 L609.0,247.0 L615.0,249.0 L621.0,250.8 L627.0,252.5 L633.0,254.0 L639.0,255.2 L645.0,256.4 L651.0,257.7 L657.0,258.9 L663.0,260.1 L669.0,261.2 L675.0,262.3 L681.0,263.4 L687.0,264.4 L693.0,265.5 L699.0,266.3 L705.0,267.1 L711.0,267.9 L717.0,268.6 L723.0,269.0 L729.0,269.2 L735.0,269.5 L741.0,269.7 L747.0,269.8 L753.0,269.9 L759.0,270.0 L765.0,269.4 L771.0,268.4 L777.0,265.7 L783.0,265.3 L789.0,265.3 M405.0,162.2 L411.0,162.2 L417.0,171.0 L423.0,174.7 L429.0,177.6 L435.0,179.1 L441.0,180.5 L447.0,182.0 L453.0,183.4 L459.0,184.9 L465.0,186.3 L471.0,187.9 L477.0,189.5 L483.0,191.2 L489.0,193.0 L495.0,194.7 L501.0,197.1 L507.0,199.8 L513.0,202.9 L519.0,205.5 L525.0,208.0 L531.0,210.3 L537.0,212.8 L543.0,214.9 L549.0,217.0 L555.0,219.2 L561.0,220.8 L567.0,224.2 L573.0,226.9 L579.0,229.5 L585.0,231.8 L591.0,234.0 L597.0,236.1 L603.0,238.1 L609.0,240.1 L615.0,242.1 L621.0,244.0 L627.0,245.6 L633.0,247.2 L639.0,248.5 L645.0,249.7 L651.0,251.0 L657.0,252.2 L663.0,253.4 L669.0,254.6 L675.0,255.7 L681.0,256.8 L687.0,257.9 L693.0,259.0 L699.0,259.9 L705.0,260.7 L711.0,261.5 L717.0,262.2 L723.0,262.6 L729.0,262.9 L735.0,263.1 L741.0,263.3 L747.0,263.5 L753.0,263.6 L759.0,263.7 L765.0,263.1 L771.0,262.2 L777.0,259.5 L783.0,259.1 L789.0,259.1 M405.0,154.8 L411.0,154.8 L417.0,163.6 L423.0,167.3 L429.0,170.3 L435.0,171.7 L441.0,173.2 L447.0,174.6 L453.0,176.1 L459.0,177.5 L465.0,179.0 L471.0,180.5 L477.0,182.2 L483.0,183.8 L489.0,185.6 L495.0,187.4 L501.0,189.8 L507.0,192.5 L513.0,195.6 L519.0,198.2 L525.0,200.7 L531.0,203.0 L537.0,205.5 L543.0,207.6 L549.0,209.8 L555.0,211.9 L561.0,213.6 L567.0,217.0 L573.0,219.8 L579.0,222.4 L585.0,224.7 L591.0,227.0 L597.0,229.1 L603.0,231.2 L609.0,233.2 L615.0,235.2 L621.0,237.1 L627.0,238.8 L633.0,240.4 L639.0,241.7 L645.0,243.0 L651.0,244.3 L657.0,245.5 L663.0,246.8 L669.0,248.0 L675.0,249.1 L681.0,250.2 L687.0,251.3 L693.0,252.4 L699.0,253.4 L705.0,254.2 L711.0,255.0 L717.0,255.8 L723.0,256.2 L729.0,256.5 L735.0,256.8 L741.0,257.0 L747.0,257.2 L753.0,257.3 L759.0,257.4 L765.0,256.8 L771.0,255.9 L777.0,253.2 L783.0,252.9 L789.0,252.9 M405.0,147.4 L411.0,147.4 L417.0,156.3 L423.0,160.0 L429.0,162.9 L435.0,164.4 L441.0,165.8 L447.0,167.3 L453.0,168.7 L459.0,170.2 L465.0,171.6 L471.0,173.2 L477.0,174.8 L483.0,176.5 L489.0,178.3 L495.0,180.1 L501.0,182.5 L507.0,185.2 L513.0,188.3 L519.0,190.9 L525.0,193.3 L531.0,195.7 L537.0,198.2 L543.0,200.4 L549.0,202.5 L555.0,204.6 L561.0,206.3 L567.0,209.8 L573.0,212.6 L579.0,215.3 L585.0,217.6 L591.0,219.9 L597.0,222.1 L603.0,224.2 L609.0,226.3 L615.0,228.4 L621.0,230.3 L627.0,232.0 L633.0,233.6 L639.0,234.9 L645.0,236.2 L651.0,237.6 L657.0,238.9 L663.0,240.1 L669.0,241.3 L675.0,242.5 L681.0,243.6 L687.0,244.8 L693.0,245.9 L699.0,246.9 L705.0,247.7 L711.0,248.6 L717.0,249.4 L723.0,249.8 L729.0,250.1 L735.0,250.5 L741.0,250.7 L747.0,250.9 L753.0,251.0 L759.0,251.2 L765.0,250.6 L771.0,249.7 L777.0,247.0 L783.0,246.8 L789.0,246.8 M405.0,140.1 L411.0,140.1 L417.0,148.9 L423.0,152.6 L429.0,155.6 L435.0,157.0 L441.0,158.5 L447.0,159.9 L453.0,161.4 L459.0,162.8 L465.0,164.3 L471.0,165.8 L477.0,167.5 L483.0,169.2 L489.0,170.9 L495.0,172.7 L501.0,175.2 L507.0,177.8 L513.0,180.9 L519.0,183.6 L525.0,186.0 L531.0,188.4 L537.0,190.9 L543.0,193.1 L549.0,195.2 L555.0,197.4 L561.0,199.0 L567.0,202.7 L573.0,205.5 L579.0,208.2 L585.0,210.6 L591.0,212.9 L597.0,215.1 L603.0,217.3 L609.0,219.4 L615.0,221.5 L621.0,223.4 L627.0,225.2 L633.0,226.8 L639.0,228.2 L645.0,229.5 L651.0,230.9 L657.0,232.2 L663.0,233.4 L669.0,234.7 L675.0,235.9 L681.0,237.1 L687.0,238.2 L693.0,239.4 L699.0,240.4 L705.0,241.3 L711.0,242.2 L717.0,242.9 L723.0,243.4 L729.0,243.8 L735.0,244.1 L741.0,244.4 L747.0,244.6 L753.0,244.7 L759.0,244.9 L765.0,244.3 L771.0,243.4 L777.0,240.8 L783.0,240.6 L789.0,240.6 M405.0,132.7 L411.0,132.7 L417.0,141.6 L423.0,145.3 L429.0,148.2 L435.0,149.7 L441.0,151.1 L447.0,152.6 L453.0,154.0 L459.0,155.5 L465.0,157.0 L471.0,158.5 L477.0,160.2 L483.0,161.8 L489.0,163.6 L495.0,165.4 L501.0,167.8 L507.0,170.5 L513.0,173.6 L519.0,176.3 L525.0,178.7 L531.0,181.1 L537.0,183.6 L543.0,185.8 L549.0,187.9 L555.0,190.1 L561.0,191.8 L567.0,195.5 L573.0,198.4 L579.0,201.1 L585.0,203.5 L591.0,205.9 L597.0,208.2 L603.0,210.3 L609.0,212.5 L615.0,214.6 L621.0,216.6 L627.0,218.4 L633.0,220.0 L639.0,221.4 L645.0,222.8 L651.0,224.2 L657.0,225.5 L663.0,226.8 L669.0,228.1 L675.0,229.3 L681.0,230.5 L687.0,231.7 L693.0,232.9 L699.0,233.9 L705.0,234.8 L711.0,235.7 L717.0,236.5 L723.0,237.0 L729.0,237.4 L735.0,237.8 L741.0,238.0 L747.0,238.2 L753.0,238.5 L759.0,238.6 L765.0,238.0 L771.0,237.1 L777.0,234.6 L783.0,234.5 L789.0,234.5" stroke="#1010a8" stroke-width="0.75" fill="none" opacity="0.65"/>
<path d="M412,300 C440,320 480,335 520,360 C560,385 600,400 640,410 L640,430 L400,360 Z" fill="#1616aa" filter="url(#b8)" opacity="0.5"/>
<defs><linearGradient id="opg" x1="0" y1="0" x2="1" y2="0"><stop offset="0" stop-color="#2626d4"/><stop offset="0.3" stop-color="#1a1ac0"/><stop offset="1" stop-color="#1010ac"/></linearGradient></defs>
<path d="M432,210 C480,208 540,214 564,229 C548,243 490,246 440,237 C436,230 434,220 432,210 Z" fill="url(#opg)"/>
<path d="M440,237 C490,246 548,243 564,230" stroke="#2a2ad8" stroke-width="1.5" fill="none" opacity="0.6" filter="url(#b2)"/>
<path d="M435,211 C480,211 540,215 563,228" stroke="#3c3ce8" stroke-width="1.3" fill="none" opacity="0.85"/>
</g></svg>
<!-- status highlights -->
<div class="abs" style="left:393.6px;top:749px;width:45.4px;height:14.4px;background:#3a5488"></div>
<div class="abs" style="left:440.7px;top:749px;width:47.1px;height:14.4px;background:#3a5488"></div>
<div class="abs" style="left:743px;top:749px;width:35.6px;height:14.4px;background:#3a5488"></div>
<div class="abs" style="left:157px;top:750px;width:11px;height:12px;background:#8a2ad8;border:1px solid #d8c0f0"></div>
<svg class="abs" style="left:76px;top:737px" width="9" height="9" viewBox="0 0 9 9"><path d="M4.5,1 L4.5,8 M1,4.5 L8,4.5" stroke="#f0f0f0" stroke-width="1.8"/></svg>
<svg class="abs" style="left:577px;top:751px" width="8" height="10" viewBox="0 0 8 10"><path d="M2,4.5 L2,3 C2,0.8 6,0.8 6,3 L6,4.5" stroke="#e0e0e0" stroke-width="1.1" fill="none"/><rect x="1" y="4.5" width="6" height="5" fill="#e8e8e8"/></svg>


<!-- dialog -->
<div class="abs" style="left:-20px;top:179.5px;width:190.8px;height:212px;background:#2f2f2f;border-radius:5px;box-shadow:0 2px 14px rgba(0,10,40,0.35);border:1px solid #222831"></div>
<div class="abs" style="left:68px;top:209px;width:82px;height:21px;background:#5b5b5b;border:1.8px solid #c8c8c8;border-radius:2px"></div>
<div class="abs" style="left:68px;top:232.2px;width:82px;height:21.4px;background:#5b5b5b;border:1.8px solid #c8c8c8;border-radius:2px"></div>
<div class="abs" style="left:68px;top:255.2px;width:82px;height:21.8px;background:#5b5b5b;border:1.8px solid #c8c8c8;border-radius:2px"></div>
<div class="abs" style="left:151px;top:210px;width:10px;height:19px;border:1px solid #626262;border-radius:3px"></div>
<div class="abs" style="left:151px;top:233.5px;width:10px;height:19px;border:1px solid #626262;border-radius:3px"></div>
<div class="abs" style="left:151px;top:257px;width:10px;height:19px;border:1px solid #626262;border-radius:3px"></div>
<div class="abs" style="left:-6px;top:284px;width:156px;height:20px;border:1px solid #5a5a5a;border-radius:3px"></div>
<div class="abs" style="left:-6px;top:311.5px;width:156px;height:20px;border:1px solid #5a5a5a;border-radius:3px"></div>
<div class="abs" style="left:-6px;top:336px;width:156px;height:20px;border:1px solid #5a5a5a;border-radius:3px"></div>
<div class="abs" style="left:-4px;top:364px;width:56.5px;height:18px;border:1px solid #8a8a8a;border-radius:3px"></div>
<div class="abs" style="left:104px;top:364px;width:58px;height:18px;border:1px solid #6a6a6a;border-radius:3px"></div>
<svg class="abs" style="left:155px;top:183px" width="12" height="12" viewBox="0 0 12 12"><path d="M2.2,2 L9.6,9.4 M9.6,2 L2.2,9.4" stroke="#d8d8d8" stroke-width="1"/></svg>


<div class="t" id="t0" style="left:0.5px;top:38.39px;font-size:9.6px;color:#d4d4d4;transform:scaleX(0.8086);">Not For Resale Lab - [Perspective]</div>
<div class="t" id="t1" style="left:-0.5px;top:51.00px;font-size:10px;color:#d0d0d0;transform:scaleX(0.7449);">I(S)</div>
<div class="t" id="t2" style="left:22px;top:51.00px;font-size:10px;color:#d0d0d0;transform:scaleX(0.8148);">SubD(U)</div>
<div class="t" id="t3" style="left:63.4px;top:51.00px;font-size:10px;color:#d0d0d0;transform:scaleX(0.8011);">實體(O)</div>
<div class="t" id="t4" style="left:101.6px;top:51.00px;font-size:10px;color:#d0d0d0;transform:scaleX(0.8400);">網格(M)</div>
<div class="t" id="t5" style="left:140.5px;top:51.00px;font-size:10px;color:#d0d0d0;transform:scaleX(0.8114);">製圖(D)</div>
<div class="t" id="t6" style="left:178px;top:51.00px;font-size:10px;color:#d0d0d0;transform:scaleX(0.7626);">變動(T)</div>
<div class="t" id="t7" style="left:214px;top:51.00px;font-size:10px;color:#d0d0d0;transform:scaleX(0.7694);">工具(L)</div>
<div class="t" id="t8" style="left:248.8px;top:51.00px;font-size:10px;color:#d0d0d0;transform:scaleX(0.8157);">分析(A)</div>
<div class="t" id="t9" style="left:285px;top:51.00px;font-size:10px;color:#d0d0d0;transform:scaleX(0.7967);">彩現(R)</div>
<div class="t" id="t10" style="left:322px;top:51.00px;font-size:10px;color:#d0d0d0;transform:scaleX(0.8400);">面板</div>
<div class="t" id="t11" style="left:347px;top:51.00px;font-size:10px;color:#d0d0d0;transform:scaleX(0.8081);">IP射出</div>
<div class="t" id="t12" style="left:380px;top:51.00px;font-size:10px;color:#d0d0d0;transform:scaleX(0.9168);">Morph</div>
<div class="t" id="t13" style="left:416px;top:51.00px;font-size:10px;color:#d0d0d0;transform:scaleX(0.7976);">視窗(W)</div>
<div class="t" id="t14" style="left:455px;top:51.00px;font-size:10px;color:#d0d0d0;transform:scaleX(0.8203);">說明(H)</div>
<div class="t" id="t15" style="left:15px;top:105.68px;font-size:9px;color:#787878;transform:scaleX(0.9444);">縮放</div>
<div class="t" id="t16" style="left:46px;top:105.68px;font-size:9px;color:#787878;transform:scaleX(1.0000);">作業視窗配置</div>
<div class="t" id="t17" style="left:114px;top:105.68px;font-size:9px;color:#787878;transform:scaleX(0.9259);">可見性</div>
<div class="t" id="t18" style="left:154px;top:105.68px;font-size:9px;color:#787878;transform:scaleX(0.9444);">變動</div>
<div class="t" id="t19" style="left:186px;top:105.68px;font-size:9px;color:#787878;transform:scaleX(0.9444);">曲線工具</div>
<div class="t" id="t20" style="left:235px;top:105.68px;font-size:9px;color:#787878;transform:scaleX(0.9722);">曲面工具</div>
<div class="t" id="t21" style="left:285px;top:105.68px;font-size:9px;color:#787878;transform:scaleX(0.9444);">實體工具</div>
<div class="t" id="t22" style="left:334px;top:105.68px;font-size:9px;color:#787878;transform:scaleX(1.0113);">SubD 工具</div>
<div class="t" id="t23" style="left:391.5px;top:105.68px;font-size:9px;color:#787878;transform:scaleX(0.9722);">網格工具</div>
<div class="t" id="t24" style="left:441px;top:105.68px;font-size:9px;color:#787878;transform:scaleX(0.9722);">彩現工具</div>
<div class="t" id="t25" style="left:490px;top:105.68px;font-size:9px;color:#787878;transform:scaleX(1.0000);">製圖</div>
<div class="t" id="t26" style="left:521.5px;top:105.68px;font-size:9px;color:#787878;transform:scaleX(0.9997);">V8 的新功能</div>
<div class="t" id="t27" style="left:-1.8px;top:213.18px;font-size:9px;color:#d0d0d0;transform:scaleX(0.9466);">Shapes  :</div>
<div class="t" id="t28" style="left:-1.2px;top:236.68px;font-size:9px;color:#d0d0d0;transform:scaleX(0.9019);">From Face:</div>
<div class="t" id="t29" style="left:-0.5px;top:260.18px;font-size:9px;color:#d0d0d0;transform:scaleX(0.9110);">To  Face :</div>
<div class="t" id="t30" style="left:0px;top:185.18px;font-size:9px;color:#e0e0e0;transform:scaleX(0.8589);">Face Mapping</div>
<div class="t" id="t31" style="left:9.7px;top:736.44px;font-size:9.5px;color:#7c7c7c;transform:scaleX(0.9961);">Front</div>
<div class="t" id="t32" style="left:43.5px;top:736.44px;font-size:9.5px;color:#7c7c7c;transform:scaleX(0.9465);">Right</div>
<div class="t" id="t33" style="left:-1px;top:751.44px;font-size:9.5px;color:#d0d0d0;transform:scaleX(0.9251);">0.850</div>
<div class="t" id="t34" style="left:52.5px;top:751.44px;font-size:9.5px;color:#d0d0d0;transform:scaleX(0.9458);">z 0</div>
<div class="t" id="t35" style="left:112px;top:751.18px;font-size:9px;color:#d0d0d0;transform:scaleX(1.0000);">公釐</div>
<div class="t" id="t36" style="left:172.5px;top:751.44px;font-size:9.5px;color:#d0d0d0;transform:scaleX(0.9469);">From Face</div>
<div class="t" id="t37" style="left:45px;top:290.18px;font-size:9px;color:#dedede;transform:scaleX(0.8848);">Reverse Face1</div>
<div class="t" id="t38" style="left:45px;top:317.18px;font-size:9px;color:#dedede;transform:scaleX(0.8848);">Reverse Face2</div>
<div class="t" id="t39" style="left:35px;top:341.68px;font-size:9px;color:#dedede;transform:scaleX(0.9189);">Switch Face2 Origin</div>
<div class="t" id="t40" style="left:18.6px;top:368.68px;font-size:9px;color:#dedede;transform:scaleX(0.8451);">OK</div>
<div class="t" id="t41" style="left:120px;top:368.68px;font-size:9px;color:#dedede;transform:scaleX(0.9102);">Cancel</div>
<div class="t" id="t42" style="left:289.7px;top:751.98px;font-size:9px;color:#d6d6d6;transform:scaleX(1.0194);">鎖點鎖定</div>
<div class="t" id="t43" style="left:339.4px;top:751.98px;font-size:9px;color:#d6d6d6;transform:scaleX(0.9389);">正交</div>
<div class="t" id="t44" style="left:369px;top:751.98px;font-size:9px;color:#d6d6d6;transform:scaleX(0.9167);">平面</div>
<div class="t" id="t45" style="left:398.5px;top:751.98px;font-size:9px;color:#d6d6d6;transform:scaleX(1.0139);">物件鎖點</div>
<div class="t" id="t46" style="left:447px;top:751.98px;font-size:9px;color:#d6d6d6;transform:scaleX(1.0000);">智慧軌跡</div>
<div class="t" id="t47" style="left:496px;top:751.98px;font-size:9px;color:#d6d6d6;transform:scaleX(0.9790);">操作軸 (工作平面)</div>
<div class="t" id="t48" style="left:592px;top:751.98px;font-size:9px;color:#d6d6d6;transform:scaleX(0.9876);">自動工作平面 (物件)</div>
<div class="t" id="t49" style="left:683px;top:751.98px;font-size:9px;color:#d6d6d6;transform:scaleX(0.9593);">記錄建構歷史</div>
<div class="t" id="t50" style="left:747.8px;top:751.98px;font-size:9px;color:#d6d6d6;transform:scaleX(0.9630);">過濾器</div>
<div class="t" id="t51" style="left:789.4px;top:751.98px;font-size:9px;color:#d6d6d6;transform:scaleX(0.9481);">可見性</div>
</body></html>
